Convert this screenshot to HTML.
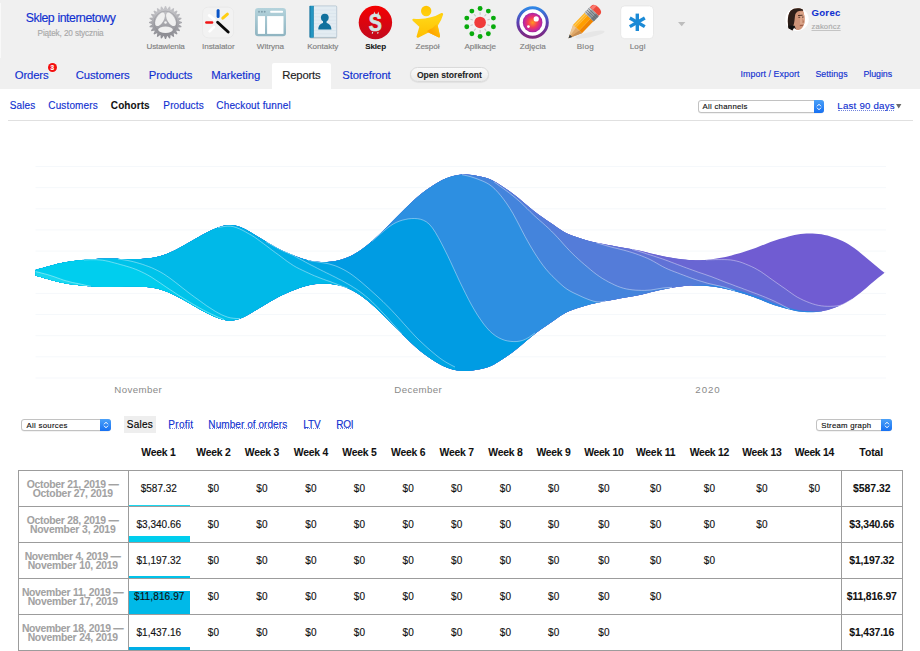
<!DOCTYPE html>
<html><head><meta charset="utf-8"><title>Sklep internetowy</title>
<style>
html,body{margin:0;padding:0;background:#fff}
body{width:920px;height:651px;position:relative;overflow:hidden;font-family:"Liberation Sans",sans-serif;-webkit-text-stroke:.14px}
</style></head><body>
<div style="position:absolute;left:0;top:0;width:920px;height:89.3px;background:#f0f0f0"></div>
<div style="position:absolute;left:272px;top:63px;width:59px;height:26px;background:#fff;border-radius:2px 2px 0 0"></div>
<div style="position:absolute;left:0;top:3px;width:1.2px;height:55px;background:#f9f9f9"></div>

<svg style="position:absolute;left:0;top:0" width="920" height="60" viewBox="0 0 920 60">
<defs>
<linearGradient id="gGear" x1="0" y1="0" x2="0" y2="1"><stop offset="0" stop-color="#c6c6ca"/><stop offset="1" stop-color="#8c8c92"/></linearGradient>
<linearGradient id="gRed" x1="0" y1="0" x2="0" y2="1"><stop offset="0" stop-color="#f40000"/><stop offset="1" stop-color="#c20a1e"/></linearGradient>
<linearGradient id="gRing" x1="0" y1="0" x2="0" y2="1"><stop offset="0" stop-color="#2f86e6"/><stop offset=".5" stop-color="#5a3fb0"/><stop offset="1" stop-color="#80267e"/></linearGradient>
<radialGradient id="gLens" cx=".5" cy=".5" r=".55"><stop offset="0" stop-color="#ff9a1e"/><stop offset=".45" stop-color="#f43a5c"/><stop offset=".8" stop-color="#c026a0"/><stop offset="1" stop-color="#7a2a9a"/></radialGradient>
<linearGradient id="gWit" x1="0" y1="0" x2="0" y2="1"><stop offset="0" stop-color="#b4d3dc"/><stop offset="1" stop-color="#8fb4c1"/></linearGradient>
<linearGradient id="gSpine" x1="0" y1="0" x2="1" y2="0"><stop offset="0" stop-color="#0f6f9c"/><stop offset=".6" stop-color="#2aa0cc"/><stop offset="1" stop-color="#127aa6"/></linearGradient>
<linearGradient id="gStar" gradientUnits="userSpaceOnUse" x1="0" y1="6" x2="0" y2="38"><stop offset="0" stop-color="#ffc400"/><stop offset=".4" stop-color="#ffd414"/><stop offset="1" stop-color="#ffbe00"/></linearGradient><linearGradient id="gStarD" gradientUnits="userSpaceOnUse" x1="430" y1="30" x2="438" y2="24"><stop offset="0" stop-color="#ffa600"/><stop offset="1" stop-color="#ffc60a"/></linearGradient>
<linearGradient id="gPen" x1="0" y1="0" x2="1" y2="1"><stop offset="0" stop-color="#ffb41a"/><stop offset=".5" stop-color="#ff9800"/><stop offset="1" stop-color="#e87800"/></linearGradient>
</defs>
<polygon points="163.76,9.31 164.98,6.01 166.02,6.01 167.24,9.31 169.27,6.44 170.27,6.70 170.59,10.21 173.30,7.96 174.19,8.48 173.60,11.95 176.80,10.47 177.53,11.20 176.05,14.40 179.52,13.81 180.04,14.70 177.79,17.41 181.30,17.73 181.56,18.73 178.69,20.76 181.99,21.98 181.99,23.02 178.69,24.24 181.56,26.27 181.30,27.27 177.79,27.59 180.04,30.30 179.52,31.19 176.05,30.60 177.53,33.80 176.80,34.53 173.60,33.05 174.19,36.52 173.30,37.04 170.59,34.79 170.27,38.30 169.27,38.56 167.24,35.69 166.02,38.99 164.98,38.99 163.76,35.69 161.73,38.56 160.73,38.30 160.41,34.79 157.70,37.04 156.81,36.52 157.40,33.05 154.20,34.53 153.47,33.80 154.95,30.60 151.48,31.19 150.96,30.30 153.21,27.59 149.70,27.27 149.44,26.27 152.31,24.24 149.01,23.02 149.01,21.98 152.31,20.76 149.44,18.73 149.70,17.73 153.21,17.41 150.96,14.70 151.48,13.81 154.95,14.40 153.47,11.20 154.20,10.47 157.40,11.95 156.81,8.48 157.70,7.96 160.41,10.21 160.73,6.70 161.73,6.44" fill="url(#gGear)"/><circle cx="165.5" cy="22.5" r="13.6" fill="url(#gGear)"/><circle cx="165.5" cy="22.5" r="11.4" fill="none" stroke="#85858b" stroke-width=".7" opacity=".55"/><ellipse cx="165.5" cy="29.8" rx="7.3" ry="3.2" fill="#f0f0f0"/><ellipse cx="160" cy="19.3" rx="7.5" ry="3.7" fill="#f0f0f0" transform="rotate(-60 160 19.3)"/><ellipse cx="171" cy="19.3" rx="7.5" ry="3.7" fill="#f0f0f0" transform="rotate(60 171 19.3)"/><circle cx="165.5" cy="22.5" r="1.25" fill="#f4f4f4"/>
<!-- installer -->
<rect x="202.6" y="7.2" width="31" height="30.6" rx="5.5" fill="#f2f2f2" stroke="#e8e8e8" stroke-width=".8"/>
<g stroke-linecap="round" fill="none">
<line x1="218.1" y1="10.6" x2="218.1" y2="16.4" stroke="#0a55c8" stroke-width="3"/>
<line x1="227.4" y1="14.2" x2="222.8" y2="18.2" stroke="#ffcf14" stroke-width="3"/>
<line x1="206.4" y1="22.5" x2="212" y2="22.5" stroke="#f01414" stroke-width="2.6"/>
<line x1="209.2" y1="15.4" x2="214.4" y2="19.6" stroke="#fff" stroke-width="2.8"/>
<line x1="209.6" y1="31.4" x2="214" y2="27" stroke="#fff" stroke-width="2.6"/>
<line x1="217.6" y1="22.2" x2="228.2" y2="32" stroke="#0a0a0a" stroke-width="2.9"/>
</g>
<!-- witryna -->
<rect x="255" y="8.1" width="31" height="28.2" rx="3.2" fill="url(#gWit)"/>
<rect x="257.8" y="16.1" width="7.2" height="17.8" fill="#fff"/>
<rect x="267.1" y="16.1" width="16.4" height="17.8" fill="#fff"/>
<rect x="270.2" y="10.7" width="12.8" height="2" rx=".6" fill="#fff"/>
<circle cx="259" cy="11.7" r=".95" fill="#7f9fac"/><circle cx="261.9" cy="11.7" r=".95" fill="#7f9fac"/><circle cx="264.7" cy="11.7" r=".95" fill="#7f9fac"/>
<!-- kontakty -->
<rect x="310.5" y="37" width="26" height="1.4" fill="#000" opacity=".25"/>
<rect x="312.5" y="5.9" width="24.2" height="31.5" rx="1" fill="#e3ecf2" stroke="#9fb6c4" stroke-width=".6"/>
<g stroke="#d3dfe8" stroke-width=".5"><line x1="314" y1="10" x2="336" y2="10"/><line x1="314" y1="13.4" x2="336" y2="13.4"/><line x1="314" y1="16.8" x2="336" y2="16.8"/><line x1="314" y1="20.2" x2="336" y2="20.2"/><line x1="314" y1="23.6" x2="336" y2="23.6"/><line x1="314" y1="27" x2="336" y2="27"/><line x1="314" y1="30.4" x2="336" y2="30.4"/><line x1="314" y1="33.8" x2="336" y2="33.8"/></g>
<rect x="309.4" y="5.7" width="4.4" height="32" rx=".8" fill="url(#gSpine)"/>
<circle cx="324.8" cy="17.6" r="3.9" fill="#10719e"/>
<path d="M318.3,29.4 C318.3,25.6 320.6,23.6 323,23 L323,21 L326.6,21 L326.6,23 C329,23.6 331.4,25.6 331.4,29.4 Z" fill="#10719e"/>
<!-- sklep -->
<circle cx="375.4" cy="22.5" r="16.7" fill="url(#gRed)"/>
<text transform="translate(375.3,31) scale(.84,1)" font-family="Liberation Sans, sans-serif" font-weight="bold" font-size="23.4" fill="#d2e5e3" stroke="#d2e5e3" stroke-width=".7" text-anchor="middle">S</text>
<path d="M373.4,14.6 L374.3,11.5 L375.4,14.2 Z M377.2,14.2 L378.4,11.5 L379.2,14.8 Z" fill="#d2e5e3"/>
<path d="M372,32 L373.2,32 L372.8,33.8 L371.8,33.8 Z M377.4,32 L378.6,32 L378.2,33.8 L377.2,33.8 Z" fill="#d2e5e3"/>
<!-- zespol -->
<circle cx="426.2" cy="11" r="5.2" fill="url(#gStar)"/>
<path d="M413.5,19.8 Q430,21.2 442,14.1 Q440.6,19.6 436.5,25.6 L438.9,36.3 L428.5,31.3 L417.7,36.6 L420.6,26.5 Z" fill="url(#gStar)" stroke="url(#gStar)" stroke-width="2.3" stroke-linejoin="round"/>
<path d="M428.5,31.3 Q433.6,29.4 436.5,25.6 L438.9,36.3 Z" fill="url(#gStarD)" stroke="url(#gStarD)" stroke-width="2.3" stroke-linejoin="round"/>
<line x1="480.10" y1="14.85" x2="480.10" y2="12.25" stroke="#c6c6c6" stroke-width="1.1"/><line x1="484.57" y1="16.30" x2="486.10" y2="14.20" stroke="#c6c6c6" stroke-width="1.1"/><line x1="487.33" y1="20.10" x2="489.80" y2="19.30" stroke="#c6c6c6" stroke-width="1.1"/><line x1="487.33" y1="24.80" x2="489.80" y2="25.60" stroke="#c6c6c6" stroke-width="1.1"/><line x1="484.57" y1="28.60" x2="486.10" y2="30.70" stroke="#c6c6c6" stroke-width="1.1"/><line x1="480.10" y1="30.05" x2="480.10" y2="32.65" stroke="#c6c6c6" stroke-width="1.1"/><line x1="475.63" y1="28.60" x2="474.10" y2="30.70" stroke="#c6c6c6" stroke-width="1.1"/><line x1="472.87" y1="24.80" x2="470.40" y2="25.60" stroke="#c6c6c6" stroke-width="1.1"/><line x1="472.87" y1="20.10" x2="470.40" y2="19.30" stroke="#c6c6c6" stroke-width="1.1"/><line x1="475.63" y1="16.30" x2="474.10" y2="14.20" stroke="#c6c6c6" stroke-width="1.1"/><circle cx="480.10" cy="8.45" r="2.45" fill="#08ab0c"/><circle cx="488.33" cy="11.12" r="2.45" fill="#08ab0c"/><circle cx="493.41" cy="18.12" r="2.45" fill="#08ab0c"/><circle cx="493.41" cy="26.78" r="2.45" fill="#08ab0c"/><circle cx="488.33" cy="33.78" r="2.45" fill="#08ab0c"/><circle cx="480.10" cy="36.45" r="2.45" fill="#08ab0c"/><circle cx="471.87" cy="33.78" r="2.45" fill="#08ab0c"/><circle cx="466.79" cy="26.78" r="2.45" fill="#08ab0c"/><circle cx="466.79" cy="18.12" r="2.45" fill="#08ab0c"/><circle cx="471.87" cy="11.12" r="2.45" fill="#08ab0c"/><circle cx="480.1" cy="22.45" r="5.8" fill="#f03a3a"/>
<!-- zdjecia -->
<circle cx="532.6" cy="22.5" r="14.7" fill="#fff" stroke="url(#gRing)" stroke-width="3"/>
<circle cx="532.6" cy="22.5" r="9.8" fill="url(#gLens)"/>
<circle cx="536.2" cy="18.9" r="2.6" fill="#fff"/><circle cx="528.4" cy="26.6" r="1.4" fill="#fff"/>
<!-- blog pencil -->
<ellipse cx="590" cy="34.6" rx="15" ry="2.6" fill="#000" opacity=".04" transform="rotate(-12 590 34.6)"/>
<g transform="translate(568.5,38.3) rotate(-46)">
<path d="M0,0 L13,-6.1 L13,6.1 Z" fill="#dfa869"/>
<path d="M0,0 L13,-6.1 L13,-2 Z" fill="#edc592"/>
<path d="M0,0 L13,6.1 L13,2.4 Z" fill="#c98f52"/>
<path d="M0,0 L3.6,-1.7 L3.6,1.7 Z" fill="#39424a"/>
<rect x="13" y="-6.1" width="16.6" height="4" fill="#ffb21e"/>
<rect x="13" y="-5" width="16.6" height="1.1" fill="#ffd068" opacity=".8"/>
<rect x="13" y="-2.1" width="16.6" height="4.4" fill="#ff9e00"/>
<rect x="13" y="2.3" width="16.6" height="3.8" fill="#f08400"/>
<rect x="29.6" y="-6.3" width="7.6" height="12.6" fill="#9aa0a5"/>
<rect x="29.6" y="-6.3" width="7.6" height="3" fill="#c2c6c9"/>
<rect x="29.6" y="2.6" width="7.6" height="3.7" fill="#767c82"/>
<g stroke="#5e646a" stroke-width=".8" opacity=".8"><line x1="31.2" y1="-6.3" x2="31.2" y2="6.3"/><line x1="33.2" y1="-6.3" x2="33.2" y2="6.3"/><line x1="35.2" y1="-6.3" x2="35.2" y2="6.3"/></g>
<path d="M37.2,-6.2 L39.4,-6.2 C42,-6.2 43,-3.4 43,0 C43,3.4 42,6.2 39.4,6.2 L37.2,6.2 Z" fill="#ee4a3c"/>
<path d="M37.6,-5.4 L39.4,-5.4 C41.4,-5.4 42.6,-4 43,-2.2 L37.6,-2.2 Z" fill="#ff8a80" opacity=".75"/>
</g>
<!-- logi -->
<rect x="620.7" y="5.9" width="32.8" height="32.8" rx="4" fill="#fff" stroke="#e4e4e4" stroke-width=".8"/>
<g stroke="#1b8ad6" stroke-width="3.4"><line x1="637.3" y1="13.6" x2="637.3" y2="31"/><line x1="629.8" y1="18" x2="644.8" y2="26.6"/><line x1="629.8" y1="26.6" x2="644.8" y2="18"/></g>
<path d="M678,22 L685.4,22 L681.7,26.2 Z" fill="#bdbdbd"/>
<!-- avatar -->
<circle cx="797" cy="19.3" r="11.7" fill="#fff"/>
<clipPath id="av"><path d="M788.6,28.2 C787.2,22 787.6,14.5 790.6,10.8 C793.6,7.8 799.6,7.6 802.8,9.6 L803.8,13.2 C804.8,16.4 805,20.4 804.2,23.8 C803.2,27.4 801,29.8 798.6,30 C796.2,30.2 794.8,28.8 794.2,27.4 L792.4,30.4 Z"/></clipPath>
<g clip-path="url(#av)">
<rect x="786" y="7" width="22" height="25" fill="#cf9478"/>
<rect x="800" y="12" width="6" height="12" fill="#dba58a"/>
<path d="M786,7 L804,7 L804.2,11 C800,10 796.6,11 795.4,14 C794.6,17 794.8,20.4 794,23.4 L793,26.4 L786,31 Z" fill="#2c1e18"/>
<path d="M786,32 L788,25.4 L794.6,25.8 L795.6,28.6 L792,32 Z" fill="#101010"/>
<path d="M798,15.6 L802.6,15.2" stroke="#3c241a" stroke-width=".9" fill="none"/>
<path d="M798.4,17.4 L800.2,17.3 M802,17.2 L803.6,17" stroke="#3c241a" stroke-width=".8" fill="none"/>
<path d="M802.6,18 L804.4,22.4 L802.4,23 Z" fill="#b87a5e"/>
<path d="M799.8,25.6 L803.4,25.3" stroke="#8e4c3c" stroke-width=".8"/>
</g>
</svg>

<div style="position:absolute;top:11px;font-size:12.3px;line-height:14.145px;color:#1030d0;white-space:nowrap;letter-spacing:-0.452px;word-spacing:0.271px;left:25.70px;">Sklep internetowy</div>
<div style="position:absolute;top:29px;font-size:8.2px;line-height:9.430px;color:#a8a8a8;white-space:nowrap;letter-spacing:-0.131px;word-spacing:0.079px;left:37.57px;">Piątek, 20 stycznia</div>
<div style="position:absolute;top:42px;font-size:8.1px;line-height:9.315px;color:#808080;white-space:nowrap;letter-spacing:-0.138px;left:146.47px;">Ustawienia</div>
<div style="position:absolute;top:42px;font-size:8.1px;line-height:9.315px;color:#808080;white-space:nowrap;letter-spacing:-0.083px;left:202.07px;">Instalator</div>
<div style="position:absolute;top:42px;font-size:8.1px;line-height:9.315px;color:#808080;white-space:nowrap;letter-spacing:-0.047px;left:256.87px;">Witryna</div>
<div style="position:absolute;top:42px;font-size:8.1px;line-height:9.315px;color:#808080;white-space:nowrap;letter-spacing:-0.050px;left:307.27px;">Kontakty</div>
<div style="position:absolute;top:42px;font-size:8.1px;line-height:9.315px;color:#111;white-space:nowrap;letter-spacing:-0.189px;font-weight:bold;-webkit-text-stroke:.06px;left:365.27px;">Sklep</div>
<div style="position:absolute;top:42px;font-size:8.1px;line-height:9.315px;color:#808080;white-space:nowrap;letter-spacing:-0.029px;left:415.47px;">Zespół</div>
<div style="position:absolute;top:42px;font-size:8.1px;line-height:9.315px;color:#808080;white-space:nowrap;letter-spacing:-0.107px;left:464.47px;">Aplikacje</div>
<div style="position:absolute;top:42px;font-size:8.1px;line-height:9.315px;color:#808080;white-space:nowrap;letter-spacing:-0.040px;left:519.87px;">Zdjęcia</div>
<div style="position:absolute;top:42px;font-size:8.1px;line-height:9.315px;color:#808080;white-space:nowrap;letter-spacing:0.283px;left:576.67px;">Blog</div>
<div style="position:absolute;top:42px;font-size:8.1px;line-height:9.315px;color:#808080;white-space:nowrap;letter-spacing:0.180px;left:629.67px;">Logi</div>
<div style="position:absolute;top:7px;font-size:9.6px;line-height:11.040px;color:#1030d0;white-space:nowrap;letter-spacing:0.328px;font-weight:bold;-webkit-text-stroke:.06px;left:811.38px;">Gorec</div>
<div style="position:absolute;top:23px;font-size:7.7px;line-height:8.855px;color:#aaa;white-space:nowrap;letter-spacing:0.133px;left:811.50px;text-decoration:underline;text-decoration-color:#c4c4c4;text-decoration-thickness:.7px;text-underline-offset:1px;">zakończ</div>
<div style="position:absolute;top:69px;font-size:11.3px;line-height:12.995px;color:#1030d0;white-space:nowrap;letter-spacing:-0.152px;left:14.87px;">Orders</div>
<div style="position:absolute;top:69px;font-size:11.3px;line-height:12.995px;color:#1030d0;white-space:nowrap;letter-spacing:-0.082px;left:75.77px;">Customers</div>
<div style="position:absolute;top:69px;font-size:11.3px;line-height:12.995px;color:#1030d0;white-space:nowrap;letter-spacing:-0.132px;left:148.77px;">Products</div>
<div style="position:absolute;top:69px;font-size:11.3px;line-height:12.995px;color:#1030d0;white-space:nowrap;letter-spacing:-0.080px;left:211.27px;">Marketing</div>
<div style="position:absolute;top:69px;font-size:11.3px;line-height:12.995px;color:#222;white-space:nowrap;letter-spacing:-0.182px;left:282.27px;">Reports</div>
<div style="position:absolute;top:69px;font-size:11.3px;line-height:12.995px;color:#1030d0;white-space:nowrap;letter-spacing:-0.127px;left:342.27px;">Storefront</div>
<div style="position:absolute;left:47.8px;top:62.6px;width:8.8px;height:9.6px;border-radius:4.6px;background:#f30f0f;box-shadow:0 0 1.5px rgba(255,255,255,.9);color:#fff;font-size:6.4px;line-height:9.6px;font-weight:bold;text-align:center">3</div>
<div style="position:absolute;left:410px;top:67.2px;width:78.6px;height:14.8px;border-radius:8px;background:linear-gradient(#fafafa,#ebebeb);border:.6px solid #dadada;box-sizing:border-box;box-shadow:0 .5px 1px rgba(0,0,0,.10)"></div>
<div style="position:absolute;top:71px;font-size:8.6px;line-height:9.890px;color:#222;white-space:nowrap;letter-spacing:-0.009px;word-spacing:0.005px;font-weight:bold;-webkit-text-stroke:.06px;left:416.94px;">Open storefront</div>
<div style="position:absolute;top:69px;font-size:8.8px;line-height:10.120px;color:#1030d0;white-space:nowrap;letter-spacing:0.104px;left:740.43px;">Import / Export</div>
<div style="position:absolute;top:69px;font-size:8.8px;line-height:10.120px;color:#1030d0;white-space:nowrap;letter-spacing:0.050px;left:815.43px;">Settings</div>
<div style="position:absolute;top:69px;font-size:8.8px;line-height:10.120px;color:#1030d0;white-space:nowrap;letter-spacing:-0.036px;left:863.43px;">Plugins</div>
<div style="position:absolute;top:99.8px;font-size:10px;line-height:11.500px;color:#1030d0;white-space:nowrap;letter-spacing:0.071px;left:9.85px;">Sales</div>
<div style="position:absolute;top:99.8px;font-size:10px;line-height:11.500px;color:#1030d0;white-space:nowrap;letter-spacing:0.118px;left:48.35px;">Customers</div>
<div style="position:absolute;top:99.8px;font-size:10px;line-height:11.500px;color:#111;white-space:nowrap;letter-spacing:0.076px;font-weight:bold;-webkit-text-stroke:.06px;left:110.85px;">Cohorts</div>
<div style="position:absolute;top:99.8px;font-size:10px;line-height:11.500px;color:#1030d0;white-space:nowrap;letter-spacing:0.119px;left:163.35px;">Products</div>
<div style="position:absolute;top:99.8px;font-size:10px;line-height:11.500px;color:#1030d0;white-space:nowrap;letter-spacing:0.144px;left:216.35px;">Checkout funnel</div>
<div style="position:absolute;left:698px;top:100.2px;width:126px;height:12.6px;box-sizing:border-box;border:.7px solid #c2c2c2;border-radius:3px;background:#fff;box-shadow:0 .5px .6px rgba(0,0,0,.1)"></div><div style="position:absolute;left:813.5px;top:100.2px;width:10.5px;height:12.6px;border-radius:0 3px 3px 0;background:linear-gradient(#4ba1f8,#1670f2)"></div><svg style="position:absolute;left:814.75px;top:101.5px" width="8" height="10" viewBox="0 0 8 10"><path d="M2.3,4 L4,2.2 L5.7,4 M2.3,6 L4,7.8 L5.7,6" stroke="#fff" stroke-width="1" fill="none" stroke-linecap="round" stroke-linejoin="round"/></svg><div style="position:absolute;top:103px;font-size:7.8px;line-height:8.970px;color:#111;white-space:nowrap;letter-spacing:0.270px;left:702.49px;">All channels</div>
<div style="position:absolute;top:100px;font-size:9.7px;line-height:11.155px;color:#1030d0;white-space:nowrap;letter-spacing:0.211px;left:837.37px;">Last 90 days<span style="position:absolute;left:0.63px;right:0.63px;top:9.5px;height:0;border-bottom:1px dotted rgba(20,50,200,.6)"></span></div>
<svg style="position:absolute;left:895.5px;top:103.6px" width="6" height="5" viewBox="0 0 6 5"><path d="M0,0 L5.4,0 L2.7,4.6 Z" fill="#6a6a6a"/></svg>
<div style="position:absolute;left:8px;top:120.1px;width:905px;height:1px;background:#e0e0e0"></div>
<svg style="position:absolute;left:0;top:130px" width="920" height="275" viewBox="0 130 920 275"><rect x="35.5" y="166.00" width="850.5" height="1" fill="#f5f8fb"/><rect x="35.5" y="187.15" width="850.5" height="1" fill="#f5f8fb"/><rect x="35.5" y="208.30" width="850.5" height="1" fill="#f5f8fb"/><rect x="35.5" y="229.45" width="850.5" height="1" fill="#f5f8fb"/><rect x="35.5" y="250.60" width="850.5" height="1" fill="#f5f8fb"/><rect x="35.5" y="271.75" width="850.5" height="1" fill="#f5f8fb"/><rect x="35.5" y="292.90" width="850.5" height="1" fill="#f5f8fb"/><rect x="35.5" y="314.05" width="850.5" height="1" fill="#f5f8fb"/><rect x="35.5" y="335.20" width="850.5" height="1" fill="#f5f8fb"/><rect x="35.5" y="356.35" width="850.5" height="1" fill="#f5f8fb"/><rect x="35.5" y="377.50" width="850.5" height="1" fill="#f5f8fb"/><path d="M35.5,270.0L38.5,269.2L41.5,268.3L44.5,267.5L47.5,266.6L50.5,265.8L53.5,264.9L56.5,264.1L59.5,263.4L62.5,262.8L65.5,262.2L68.5,261.7L71.5,261.3L74.5,260.9L77.5,260.5L80.5,260.2L83.5,259.9L86.5,259.6L89.5,259.4L92.5,259.2L95.5,259.0L98.5,258.9L101.5,258.8L104.5,258.7L107.5,258.7L110.5,258.7L113.5,258.7L116.5,258.8L119.5,258.9L122.5,258.9L125.5,259.0L128.5,259.1L131.5,259.1L134.5,259.1L137.5,259.1L140.5,259.0L143.5,258.9L146.5,258.6L149.5,258.3L152.5,257.9L155.5,257.3L158.5,256.6L161.5,255.8L164.5,254.8L167.5,253.7L170.5,252.4L173.5,251.0L176.5,249.5L179.5,247.9L182.5,246.2L185.5,244.6L188.5,242.8L191.5,241.1L194.5,239.4L197.5,237.7L200.5,236.0L203.5,234.3L206.5,232.8L209.5,231.3L212.5,229.8L215.5,228.5L218.5,227.4L221.5,226.4L224.5,225.6L227.5,225.1L230.5,225.0L233.5,225.3L236.5,225.9L239.5,226.8L242.5,228.0L245.5,229.5L248.5,231.1L251.5,232.9L254.5,234.7L257.5,236.5L260.5,238.3L263.5,240.1L266.5,241.9L269.5,243.7L272.5,245.4L275.5,247.1L278.5,248.7L281.5,250.2L284.5,251.6L287.5,252.9L290.5,254.2L293.5,255.4L296.5,256.6L299.5,257.7L302.5,258.7L305.5,259.6L308.5,260.4L311.5,261.0L314.5,261.4L317.5,261.8L320.5,262.0L323.5,262.0L326.5,262.0L329.5,261.8L332.5,261.5L335.5,261.0L338.5,260.4L341.5,259.6L344.5,258.6L347.5,257.4L350.5,256.1L353.5,254.6L356.5,252.9L359.5,251.0L362.5,248.9L365.5,246.6L368.5,244.2L371.5,241.6L374.5,238.9L377.5,236.1L380.5,233.3L383.5,230.3L386.5,227.3L389.5,224.3L392.5,221.2L395.5,218.2L398.5,215.2L401.5,212.2L404.5,209.2L407.5,206.3L410.5,203.4L413.5,200.6L416.5,197.9L419.5,195.3L422.5,192.9L425.5,190.7L428.5,188.5L431.5,186.5L434.5,184.5L437.5,182.7L440.5,181.0L443.5,179.5L446.5,178.2L449.5,177.2L452.5,176.2L455.5,175.5L458.5,175.0L461.5,174.6L464.5,174.5L467.5,174.6L470.5,174.9L473.5,175.3L476.5,175.8L479.5,176.4L482.5,177.0L485.5,177.7L488.5,178.7L491.5,180.0L494.5,181.5L497.5,183.3L500.5,185.2L503.5,187.2L506.5,189.2L509.5,191.2L512.5,193.4L515.5,195.7L518.5,198.1L521.5,200.7L524.5,203.2L527.5,205.8L530.5,208.3L533.5,210.7L536.5,213.0L539.5,215.2L542.5,217.4L545.5,219.4L548.5,221.5L551.5,223.5L554.5,225.6L557.5,227.7L560.5,229.8L563.5,231.7L566.5,233.3L569.5,234.6L572.5,235.8L575.5,236.8L578.5,237.8L581.5,238.8L584.5,239.7L587.5,240.6L590.5,241.4L593.5,242.1L596.5,242.7L599.5,243.3L602.5,243.9L605.5,244.5L608.5,245.0L611.5,245.6L614.5,246.2L617.5,246.7L620.5,247.3L623.5,247.8L626.5,248.3L629.5,248.8L632.5,249.3L635.5,249.9L638.5,250.4L641.5,251.1L644.5,251.8L647.5,252.6L650.5,253.4L653.5,254.1L656.5,254.8L659.5,255.5L662.5,256.1L665.5,256.7L668.5,257.3L671.5,257.8L674.5,258.3L677.5,258.8L680.5,259.1L683.5,259.5L686.5,259.7L689.5,260.0L692.5,260.1L695.5,260.2L698.5,260.2L701.5,260.2L704.5,260.0L707.5,259.8L710.5,259.4L713.5,259.1L716.5,258.6L719.5,258.1L722.5,257.5L725.5,256.9L728.5,256.2L731.5,255.4L734.5,254.6L737.5,253.8L740.5,252.9L743.5,252.0L746.5,251.1L749.5,250.1L752.5,249.1L755.5,248.0L758.5,246.8L761.5,245.6L764.5,244.4L767.5,243.2L770.5,242.0L773.5,240.9L776.5,239.9L779.5,239.0L782.5,238.2L785.5,237.4L788.5,236.6L791.5,235.8L794.5,235.1L797.5,234.5L800.5,234.1L803.5,233.8L806.5,233.6L809.5,233.5L812.5,233.5L815.5,233.7L818.5,233.9L821.5,234.3L824.5,234.9L827.5,235.6L830.5,236.5L833.5,237.5L836.5,238.6L839.5,239.8L842.5,241.1L845.5,242.6L848.5,244.3L851.5,246.2L854.5,248.3L857.5,250.5L860.5,252.9L863.5,255.4L866.5,257.9L869.5,260.5L872.5,263.0L875.5,265.5L878.5,268.0L881.5,270.4L884.5,272.8L884.5,272.8L881.5,275.2L878.5,277.6L875.5,280.1L872.5,282.6L869.5,285.1L866.5,287.7L863.5,290.2L860.5,292.7L857.5,295.1L854.5,297.3L851.5,299.4L848.5,301.3L845.5,303.0L842.5,304.5L839.5,305.8L836.5,307.0L833.5,308.1L830.5,309.1L827.5,310.0L824.5,310.7L821.5,311.3L818.5,311.7L815.5,311.9L812.5,312.1L809.5,312.1L806.5,312.0L803.5,311.8L800.5,311.5L797.5,311.1L794.5,310.5L791.5,309.8L788.5,309.0L785.5,308.2L782.5,307.4L779.5,306.6L776.5,305.7L773.5,304.7L770.5,303.6L767.5,302.4L764.5,301.2L761.5,300.0L758.5,298.8L755.5,297.6L752.5,296.5L749.5,295.5L746.5,294.5L743.5,293.6L740.5,292.7L737.5,291.8L734.5,291.0L731.5,290.2L728.5,289.4L725.5,288.7L722.5,288.1L719.5,287.5L716.5,287.0L713.5,286.5L710.5,286.2L707.5,285.8L704.5,285.6L701.5,285.4L698.5,285.4L695.5,285.4L692.5,285.5L689.5,285.6L686.5,285.9L683.5,286.1L680.5,286.5L677.5,286.8L674.5,287.3L671.5,287.8L668.5,288.3L665.5,288.9L662.5,289.5L659.5,290.1L656.5,290.8L653.5,291.5L650.5,292.2L647.5,293.0L644.5,293.8L641.5,294.5L638.5,295.2L635.5,295.7L632.5,296.3L629.5,296.8L626.5,297.3L623.5,297.8L620.5,298.3L617.5,298.9L614.5,299.4L611.5,300.0L608.5,300.6L605.5,301.1L602.5,301.7L599.5,302.3L596.5,302.9L593.5,303.5L590.5,304.2L587.5,305.0L584.5,305.9L581.5,306.8L578.5,307.8L575.5,308.8L572.5,309.8L569.5,311.0L566.5,312.3L563.5,313.9L560.5,315.8L557.5,317.9L554.5,320.0L551.5,322.1L548.5,324.1L545.5,326.2L542.5,328.2L539.5,330.4L536.5,332.6L533.5,334.9L530.5,337.3L527.5,339.8L524.5,342.4L521.5,344.9L518.5,347.5L515.5,349.9L512.5,352.2L509.5,354.4L506.5,356.4L503.5,358.4L500.5,360.4L497.5,362.3L494.5,364.1L491.5,365.6L488.5,366.9L485.5,367.9L482.5,368.6L479.5,369.2L476.5,369.8L473.5,370.3L470.5,370.7L467.5,371.0L464.5,371.1L461.5,371.0L458.5,370.6L455.5,370.1L452.5,369.4L449.5,368.4L446.5,367.4L443.5,366.1L440.5,364.6L437.5,362.9L434.5,361.1L431.5,359.1L428.5,357.1L425.5,354.9L422.5,352.7L419.5,350.3L416.5,347.7L413.5,345.0L410.5,342.2L407.5,339.3L404.5,336.4L401.5,333.4L398.5,330.4L395.5,327.4L392.5,324.4L389.5,321.3L386.5,318.3L383.5,315.3L380.5,312.3L377.5,309.5L374.5,306.7L371.5,304.0L368.5,301.4L365.5,299.0L362.5,296.7L359.5,294.6L356.5,292.7L353.5,291.0L350.5,289.5L347.5,288.2L344.5,287.0L341.5,286.0L338.5,285.2L335.5,284.6L332.5,284.1L329.5,283.8L326.5,283.6L323.5,283.6L320.5,283.6L317.5,283.9L314.5,284.2L311.5,284.6L308.5,285.2L305.5,286.0L302.5,286.9L299.5,287.9L296.5,289.0L293.5,290.2L290.5,291.4L287.5,292.7L284.5,294.0L281.5,295.4L278.5,296.9L275.5,298.5L272.5,300.2L269.5,301.9L266.5,303.7L263.5,305.5L260.5,307.3L257.5,309.1L254.5,310.9L251.5,312.7L248.5,314.5L245.5,316.1L242.5,317.6L239.5,318.8L236.5,319.7L233.5,320.3L230.5,320.6L227.5,320.5L224.5,320.0L221.5,319.2L218.5,318.2L215.5,317.1L212.5,315.8L209.5,314.3L206.5,312.8L203.5,311.3L200.5,309.6L197.5,307.9L194.5,306.2L191.5,304.5L188.5,302.8L185.5,301.0L182.5,299.4L179.5,297.7L176.5,296.1L173.5,294.6L170.5,293.2L167.5,291.9L164.5,290.8L161.5,289.8L158.5,289.0L155.5,288.3L152.5,287.7L149.5,287.3L146.5,287.0L143.5,286.7L140.5,286.6L137.5,286.5L134.5,286.5L131.5,286.5L128.5,286.5L125.5,286.6L122.5,286.7L119.5,286.7L116.5,286.8L113.5,286.9L110.5,286.9L107.5,286.9L104.5,286.9L101.5,286.8L98.5,286.7L95.5,286.6L92.5,286.4L89.5,286.2L86.5,286.0L83.5,285.7L80.5,285.4L77.5,285.1L74.5,284.7L71.5,284.3L68.5,283.9L65.5,283.4L62.5,282.8L59.5,282.2L56.5,281.5L53.5,280.7L50.5,279.8L47.5,279.0L44.5,278.1L41.5,277.3L38.5,276.4L35.5,275.6Z" fill="#705cd2"/>
<path d="M35.5,270.0L38.5,269.1L41.5,268.3L44.5,267.4L47.5,266.6L50.5,265.7L53.5,264.9L56.5,264.1L59.6,263.4L62.6,262.8L65.6,262.2L68.6,261.7L71.6,261.3L74.6,260.9L77.6,260.5L80.6,260.2L83.6,259.9L86.6,259.6L89.6,259.4L92.6,259.2L95.6,259.0L98.6,258.8L101.6,258.8L104.7,258.7L107.7,258.7L110.7,258.7L113.7,258.7L116.7,258.8L119.7,258.9L122.7,258.9L125.7,259.0L128.7,259.1L131.7,259.1L134.7,259.1L137.7,259.1L140.7,259.0L143.7,258.8L146.7,258.6L149.8,258.3L152.8,257.8L155.8,257.3L158.8,256.6L161.8,255.7L164.8,254.7L167.8,253.6L170.8,252.3L173.8,250.8L176.8,249.3L179.8,247.7L182.8,246.1L185.8,244.4L188.8,242.6L191.8,240.9L194.9,239.2L197.9,237.5L200.9,235.8L203.9,234.1L206.9,232.6L209.9,231.1L212.9,229.7L215.9,228.4L218.9,227.2L221.9,226.2L224.9,225.5L227.9,225.1L230.9,225.0L233.9,225.3L237.0,226.0L240.0,227.0L243.0,228.2L246.0,229.7L249.0,231.4L252.0,233.2L255.0,235.0L258.0,236.8L261.0,238.6L264.0,240.4L267.0,242.2L270.0,244.0L273.0,245.7L276.0,247.4L279.0,249.0L282.1,250.5L285.1,251.9L288.1,253.2L291.1,254.4L294.1,255.6L297.1,256.8L300.1,257.9L303.1,258.9L306.1,259.8L309.1,260.5L312.1,261.1L315.1,261.5L318.1,261.8L321.1,262.0L324.1,262.0L327.2,262.0L330.2,261.7L333.2,261.4L336.2,260.9L339.2,260.2L342.2,259.3L345.2,258.3L348.2,257.1L351.2,255.8L354.2,254.2L357.2,252.4L360.2,250.5L363.2,248.3L366.2,246.0L369.2,243.6L372.3,241.0L375.3,238.2L378.3,235.4L381.3,232.5L384.3,229.5L387.3,226.5L390.3,223.5L393.3,220.4L396.3,217.4L399.3,214.4L402.3,211.4L405.3,208.4L408.3,205.5L411.3,202.6L414.3,199.8L417.4,197.1L420.4,194.6L423.4,192.3L426.4,190.0L429.4,187.9L432.4,185.9L435.4,184.0L438.4,182.2L441.4,180.5L444.4,179.1L447.4,177.9L450.4,176.9L453.4,176.0L456.4,175.3L459.4,174.8L462.5,174.6L465.5,174.5L468.5,174.7L471.5,175.0L474.5,175.5L477.5,176.0L480.5,176.6L483.5,177.2L486.5,178.0L489.5,179.1L492.5,180.5L495.5,182.1L498.5,183.9L501.5,185.9L504.5,187.9L507.6,189.9L510.6,192.0L513.6,194.2L516.6,196.6L519.6,199.0L522.6,201.6L525.6,204.2L528.6,206.7L531.6,209.2L534.6,211.6L537.6,213.9L540.6,216.1L543.6,218.1L546.6,220.2L549.7,222.2L552.7,224.3L555.7,226.4L558.7,228.5L561.7,230.5L564.7,232.3L567.7,233.8L570.7,235.1L573.7,236.2L576.7,237.2L579.7,238.2L582.7,239.2L585.7,240.1L588.7,240.9L591.7,241.7L594.8,242.4L597.8,243.0L600.8,243.6L603.8,244.1L606.8,244.7L609.8,245.3L612.8,245.8L615.8,246.4L618.8,247.0L621.8,247.5L624.8,248.0L627.8,248.6L630.8,249.1L633.8,249.6L636.8,250.1L639.9,250.7L642.9,251.4L645.9,252.2L648.9,253.0L651.9,253.7L654.9,254.5L657.9,255.1L660.9,255.8L663.9,256.4L666.9,257.0L669.9,257.5L672.9,258.1L675.9,258.5L678.9,258.9L681.9,259.3L685.0,259.6L688.0,259.9L691.0,260.1L694.0,260.2L697.0,260.2L700.0,260.2L703.0,260.1L706.0,259.9L706.0,259.9L709.0,259.7L712.1,259.7L715.1,259.6L718.2,259.6L721.2,259.6L724.2,259.6L727.3,259.7L730.3,259.9L733.4,260.4L736.4,261.0L739.5,261.8L742.5,262.8L745.5,264.0L748.6,265.3L751.6,266.6L754.7,268.1L757.7,269.8L760.8,271.6L763.8,273.7L766.8,275.8L769.9,278.1L772.9,280.2L776.0,282.4L779.0,284.5L782.0,286.6L785.1,288.7L788.1,290.9L791.2,293.1L794.2,295.2L797.2,297.1L800.3,298.7L803.3,300.2L806.4,301.5L809.4,302.7L812.5,303.8L815.5,304.7L818.5,305.4L821.6,305.9L824.6,306.2L827.7,306.3L830.7,306.3L833.8,306.2L836.8,305.9L839.8,305.4L842.9,304.3L845.9,302.7L849.0,301.0L852.0,299.0L852.0,299.0L849.0,301.0L846.0,302.7L843.0,304.2L840.0,305.6L837.0,306.8L834.0,308.0L831.0,309.0L828.0,309.9L825.0,310.6L822.0,311.2L819.0,311.6L816.0,311.9L813.0,312.1L810.0,312.1L807.0,312.0L804.0,311.9L801.0,311.6L798.0,311.2L795.0,310.6L792.0,309.9L789.0,309.2L786.0,308.4L783.0,307.5L780.0,306.7L777.0,305.8L774.0,304.9L771.0,303.8L767.9,302.6L764.9,301.4L761.9,300.1L758.9,298.9L755.9,297.8L752.9,296.7L749.9,295.7L746.9,294.7L743.9,293.7L740.9,292.8L737.9,291.9L734.9,291.1L731.9,290.3L728.9,289.5L725.9,288.8L722.9,288.2L719.9,287.6L716.9,287.1L713.9,286.6L710.9,286.2L707.9,285.9L704.9,285.6L701.9,285.5L698.9,285.4L695.9,285.4L692.9,285.4L689.9,285.6L686.9,285.8L683.9,286.1L680.9,286.4L677.9,286.8L674.9,287.2L671.9,287.7L668.9,288.2L665.9,288.8L662.9,289.4L659.9,290.0L656.9,290.7L653.9,291.4L650.9,292.1L647.9,292.9L644.9,293.7L641.9,294.4L638.9,295.1L635.9,295.7L632.9,296.2L629.9,296.7L626.9,297.2L623.9,297.7L620.9,298.3L617.9,298.8L614.9,299.4L611.9,299.9L608.9,300.5L605.8,301.1L602.8,301.6L599.8,302.2L596.8,302.8L593.8,303.4L590.8,304.1L587.8,304.9L584.8,305.8L581.8,306.7L578.8,307.7L575.8,308.6L572.8,309.7L569.8,310.8L566.8,312.2L563.8,313.8L560.8,315.6L557.8,317.6L554.8,319.8L551.8,321.9L548.8,323.9L545.8,326.0L542.8,328.0L539.8,330.1L536.8,332.4L533.8,334.7L530.8,337.1L527.8,339.5L524.8,342.1L521.8,344.7L518.8,347.2L515.8,349.7L512.8,352.0L509.8,354.2L506.8,356.2L503.8,358.2L500.8,360.2L497.8,362.1L494.8,363.9L491.8,365.5L488.8,366.8L485.8,367.8L482.8,368.6L479.8,369.2L476.8,369.7L473.8,370.2L470.8,370.7L467.8,371.0L464.8,371.1L461.8,371.0L458.8,370.7L455.8,370.1L452.8,369.4L449.8,368.5L446.8,367.5L443.8,366.2L440.7,364.7L437.7,363.1L434.7,361.2L431.7,359.3L428.7,357.2L425.7,355.1L422.7,352.8L419.7,350.5L416.7,347.9L413.7,345.2L410.7,342.4L407.7,339.5L404.7,336.6L401.7,333.6L398.7,330.6L395.7,327.6L392.7,324.6L389.7,321.5L386.7,318.5L383.7,315.5L380.7,312.5L377.7,309.7L374.7,306.9L371.7,304.2L368.7,301.6L365.7,299.2L362.7,296.9L359.7,294.8L356.7,292.9L353.7,291.1L350.7,289.6L347.7,288.2L344.7,287.1L341.7,286.1L338.7,285.3L335.7,284.6L332.7,284.2L329.7,283.8L326.7,283.6L323.7,283.6L320.7,283.6L317.7,283.8L314.7,284.2L311.7,284.6L308.7,285.2L305.7,285.9L302.7,286.8L299.7,287.8L296.7,288.9L293.7,290.1L290.7,291.3L287.7,292.6L284.7,293.9L281.7,295.3L278.6,296.8L275.6,298.4L272.6,300.1L269.6,301.8L266.6,303.6L263.6,305.4L260.6,307.2L257.6,309.0L254.6,310.8L251.6,312.7L248.6,314.4L245.6,316.1L242.6,317.5L239.6,318.8L236.6,319.7L233.6,320.3L230.6,320.6L227.6,320.5L224.6,320.0L221.6,319.3L218.6,318.3L215.6,317.1L212.6,315.8L209.6,314.4L206.6,312.9L203.6,311.3L200.6,309.7L197.6,308.0L194.6,306.3L191.6,304.6L188.6,302.8L185.6,301.1L182.6,299.4L179.6,297.8L176.6,296.2L173.6,294.7L170.6,293.2L167.6,292.0L164.6,290.8L161.6,289.8L158.6,289.0L155.6,288.3L152.6,287.7L149.6,287.3L146.6,287.0L143.6,286.7L140.6,286.6L137.6,286.5L134.6,286.5L131.6,286.5L128.6,286.5L125.6,286.6L122.6,286.7L119.6,286.7L116.5,286.8L113.5,286.9L110.5,286.9L107.5,286.9L104.5,286.9L101.5,286.8L98.5,286.7L95.5,286.6L92.5,286.4L89.5,286.2L86.5,286.0L83.5,285.7L80.5,285.4L77.5,285.1L74.5,284.7L71.5,284.3L68.5,283.9L65.5,283.4L62.5,282.8L59.5,282.2L56.5,281.5L53.5,280.7L50.5,279.8L47.5,279.0L44.5,278.2L41.5,277.3L38.5,276.5L35.5,275.6Z" fill="#6966d3"/>
<path d="M35.5,270.0L38.5,269.1L41.5,268.3L44.5,267.4L47.6,266.6L50.6,265.7L53.6,264.9L56.6,264.1L59.6,263.4L62.6,262.8L65.6,262.2L68.6,261.7L71.7,261.3L74.7,260.9L77.7,260.5L80.7,260.2L83.7,259.9L86.7,259.6L89.7,259.4L92.7,259.2L95.8,259.0L98.8,258.8L101.8,258.8L104.8,258.7L107.8,258.7L110.8,258.7L113.8,258.7L116.8,258.8L119.9,258.9L122.9,258.9L125.9,259.0L128.9,259.1L131.9,259.1L134.9,259.1L137.9,259.1L140.9,259.0L144.0,258.8L147.0,258.6L150.0,258.2L153.0,257.8L156.0,257.2L159.0,256.5L162.0,255.6L165.0,254.6L168.1,253.4L171.1,252.1L174.1,250.7L177.1,249.2L180.1,247.6L183.1,245.9L186.1,244.2L189.1,242.5L192.2,240.7L195.2,239.0L198.2,237.3L201.2,235.6L204.2,234.0L207.2,232.4L210.2,230.9L213.2,229.5L216.3,228.2L219.3,227.1L222.3,226.1L225.3,225.4L228.3,225.1L231.3,225.0L234.3,225.4L237.3,226.1L240.4,227.1L243.4,228.4L246.4,229.9L249.4,231.6L252.4,233.4L255.4,235.3L258.4,237.1L261.4,238.9L264.5,240.7L267.5,242.5L270.5,244.3L273.5,246.0L276.5,247.7L279.5,249.3L282.5,250.7L285.5,252.1L288.6,253.4L291.6,254.6L294.6,255.8L297.6,257.0L300.6,258.1L303.6,259.1L306.6,259.9L309.6,260.6L312.7,261.2L315.7,261.6L318.7,261.8L321.7,262.0L324.7,262.0L327.7,261.9L330.7,261.7L333.8,261.3L336.8,260.7L339.8,260.0L342.8,259.2L345.8,258.1L348.8,256.9L351.8,255.5L354.8,253.8L357.9,252.0L360.9,250.0L363.9,247.8L366.9,245.5L369.9,243.0L372.9,240.4L375.9,237.6L378.9,234.8L382.0,231.8L385.0,228.9L388.0,225.8L391.0,222.8L394.0,219.7L397.0,216.7L400.0,213.7L403.0,210.7L406.1,207.7L409.1,204.8L412.1,201.9L415.1,199.1L418.1,196.5L421.1,194.0L424.1,191.7L427.1,189.5L430.2,187.4L433.2,185.4L436.2,183.5L439.2,181.7L442.2,180.1L445.2,178.8L448.2,177.6L451.2,176.6L454.3,175.8L457.3,175.2L460.3,174.7L463.3,174.5L466.3,174.5L469.3,174.8L472.3,175.1L475.3,175.6L478.4,176.2L481.4,176.7L484.4,177.4L487.4,178.3L490.4,179.5L493.4,180.9L496.4,182.6L499.4,184.5L502.5,186.5L505.5,188.5L508.5,190.5L511.5,192.7L514.5,194.9L517.5,197.3L520.5,199.8L523.5,202.4L526.6,205.0L529.6,207.5L532.6,210.0L535.6,212.3L538.6,214.6L541.6,216.8L544.6,218.8L547.6,220.9L550.7,222.9L553.7,225.0L556.7,227.2L559.7,229.2L562.7,231.2L565.7,232.9L568.7,234.3L571.7,235.5L574.8,236.6L577.8,237.6L580.8,238.6L583.8,239.5L586.8,240.4L589.8,241.2L592.8,241.9L595.8,242.6L598.9,243.2L601.9,243.8L604.9,244.4L607.9,244.9L610.9,245.5L613.9,246.0L616.9,246.6L619.9,247.2L623.0,247.7L626.0,248.2L629.0,248.7L632.0,249.2L632.0,249.3L635.0,250.2L638.1,251.1L641.1,252.0L644.2,253.0L647.2,254.0L650.2,254.9L653.3,255.9L656.3,256.9L659.3,257.9L662.4,258.9L665.4,260.0L668.5,261.1L671.5,262.3L674.5,263.4L677.6,264.6L680.6,265.7L683.7,266.9L686.7,268.0L689.7,269.1L692.8,270.2L695.8,271.3L698.8,272.4L701.9,273.4L704.9,274.4L708.0,275.5L711.0,276.5L714.0,277.7L717.1,278.9L720.1,280.1L723.2,281.3L726.2,282.5L729.2,283.6L732.3,284.7L735.3,285.9L738.3,287.0L741.4,288.1L744.4,289.3L747.5,290.4L750.5,291.6L753.5,292.7L756.6,293.8L759.6,295.0L762.7,296.2L765.7,297.4L768.7,298.7L771.8,300.0L774.8,301.4L777.8,302.9L780.9,304.4L783.9,306.1L787.0,307.7L790.0,309.4L790.0,309.4L787.0,308.6L784.0,307.8L781.0,307.0L778.0,306.1L775.0,305.2L772.0,304.2L769.0,303.0L766.0,301.8L762.9,300.5L759.9,299.3L756.9,298.2L753.9,297.1L750.9,296.0L747.9,295.0L744.9,294.0L741.9,293.1L738.9,292.2L735.9,291.3L732.9,290.5L729.9,289.8L726.9,289.1L723.9,288.4L720.9,287.8L717.9,287.2L714.9,286.7L711.8,286.3L708.8,286.0L705.8,285.7L702.8,285.5L699.8,285.4L696.8,285.4L693.8,285.4L690.8,285.6L687.8,285.8L684.8,286.0L681.8,286.3L678.8,286.7L675.8,287.1L672.8,287.6L669.8,288.1L666.8,288.7L663.7,289.2L660.7,289.9L657.7,290.5L654.7,291.2L651.7,291.9L648.7,292.7L645.7,293.5L642.7,294.2L639.7,294.9L636.7,295.5L633.7,296.1L630.7,296.6L627.7,297.1L624.7,297.6L621.7,298.1L618.7,298.7L615.7,299.2L612.6,299.8L609.6,300.4L606.6,300.9L603.6,301.5L600.6,302.1L597.6,302.6L594.6,303.3L591.6,304.0L588.6,304.7L585.6,305.6L582.6,306.5L579.6,307.4L576.6,308.4L573.6,309.4L570.6,310.5L567.6,311.8L564.6,313.3L561.5,315.1L558.5,317.1L555.5,319.3L552.5,321.4L549.5,323.5L546.5,325.5L543.5,327.5L540.5,329.6L537.5,331.8L534.5,334.1L531.5,336.5L528.5,339.0L525.5,341.5L522.5,344.1L519.5,346.7L516.5,349.1L513.5,351.5L510.4,353.7L507.4,355.8L504.4,357.8L501.4,359.8L498.4,361.7L495.4,363.6L492.4,365.2L489.4,366.5L486.4,367.6L483.4,368.4L480.4,369.1L477.4,369.6L474.4,370.1L471.4,370.6L468.4,370.9L465.4,371.1L462.3,371.0L459.3,370.7L456.3,370.3L453.3,369.6L450.3,368.7L447.3,367.7L444.3,366.4L441.3,365.0L438.3,363.4L435.3,361.6L432.3,359.6L429.3,357.6L426.3,355.5L423.3,353.3L420.3,350.9L417.3,348.4L414.3,345.7L411.2,342.9L408.2,340.0L405.2,337.1L402.2,334.1L399.2,331.1L396.2,328.1L393.2,325.1L390.2,322.0L387.2,319.0L384.2,316.0L381.2,313.0L378.2,310.1L375.2,307.3L372.2,304.6L369.2,302.0L366.2,299.5L363.2,297.2L360.1,295.1L357.1,293.1L354.1,291.4L351.1,289.8L348.1,288.4L345.1,287.2L342.1,286.2L339.1,285.4L336.1,284.7L333.1,284.2L330.1,283.9L327.1,283.6L324.1,283.6L321.1,283.6L318.1,283.8L315.1,284.1L312.0,284.5L309.0,285.1L306.0,285.8L303.0,286.7L300.0,287.7L297.0,288.8L294.0,290.0L291.0,291.2L288.0,292.5L285.0,293.7L282.0,295.1L279.0,296.6L276.0,298.2L273.0,299.9L270.0,301.6L267.0,303.4L264.0,305.2L260.9,307.0L257.9,308.8L254.9,310.6L251.9,312.5L248.9,314.3L245.9,315.9L242.9,317.4L239.9,318.7L236.9,319.6L233.9,320.3L230.9,320.6L227.9,320.5L224.9,320.1L221.9,319.3L218.9,318.4L215.9,317.2L212.9,315.9L209.8,314.5L206.8,313.0L203.8,311.4L200.8,309.8L197.8,308.1L194.8,306.4L191.8,304.7L188.8,302.9L185.8,301.2L182.8,299.5L179.8,297.9L176.8,296.3L173.8,294.7L170.8,293.3L167.8,292.0L164.8,290.9L161.8,289.9L158.7,289.0L155.7,288.3L152.7,287.8L149.7,287.3L146.7,287.0L143.7,286.8L140.7,286.6L137.7,286.5L134.7,286.5L131.7,286.5L128.7,286.5L125.7,286.6L122.7,286.7L119.7,286.7L116.7,286.8L113.7,286.9L110.6,286.9L107.6,286.9L104.6,286.9L101.6,286.8L98.6,286.8L95.6,286.6L92.6,286.4L89.6,286.2L86.6,286.0L83.6,285.7L80.6,285.4L77.6,285.1L74.6,284.7L71.6,284.3L68.6,283.9L65.6,283.4L62.6,282.8L59.5,282.2L56.5,281.5L53.5,280.7L50.5,279.9L47.5,279.0L44.5,278.2L41.5,277.3L38.5,276.5L35.5,275.6Z" fill="#6072d6"/>
<path d="M35.5,270.0L38.5,269.1L41.5,268.3L44.5,267.4L47.6,266.6L50.6,265.7L53.6,264.9L56.6,264.1L59.6,263.4L62.6,262.8L65.6,262.2L68.6,261.7L71.7,261.3L74.7,260.9L77.7,260.5L80.7,260.2L83.7,259.9L86.7,259.6L89.7,259.4L92.8,259.2L95.8,259.0L98.8,258.8L101.8,258.8L104.8,258.7L107.8,258.7L110.8,258.7L113.8,258.7L116.9,258.8L119.9,258.9L122.9,258.9L125.9,259.0L128.9,259.1L131.9,259.1L134.9,259.1L138.0,259.1L141.0,259.0L144.0,258.8L147.0,258.6L150.0,258.2L153.0,257.8L156.0,257.2L159.1,256.5L162.1,255.6L165.1,254.6L168.1,253.4L171.1,252.1L174.1,250.7L177.1,249.2L180.1,247.5L183.2,245.9L186.2,244.2L189.2,242.4L192.2,240.7L195.2,239.0L198.2,237.2L201.2,235.6L204.3,233.9L207.3,232.4L210.3,230.9L213.3,229.5L216.3,228.2L219.3,227.1L222.3,226.1L225.3,225.4L228.4,225.1L231.4,225.0L234.4,225.4L237.4,226.1L240.4,227.1L243.4,228.4L246.4,230.0L249.5,231.7L252.5,233.5L255.5,235.3L258.5,237.1L261.5,238.9L264.5,240.7L267.5,242.5L270.5,244.3L273.6,246.0L276.6,247.7L279.6,249.3L282.6,250.8L285.6,252.1L288.6,253.4L291.6,254.7L294.7,255.9L297.7,257.0L300.7,258.1L303.7,259.1L306.7,260.0L309.7,260.6L312.7,261.2L315.8,261.6L318.8,261.9L321.8,262.0L324.8,262.0L327.8,261.9L330.8,261.7L333.8,261.3L336.8,260.7L339.9,260.0L342.9,259.1L345.9,258.1L348.9,256.8L351.9,255.4L354.9,253.8L357.9,252.0L361.0,250.0L364.0,247.8L367.0,245.4L370.0,242.9L373.0,240.3L376.0,237.5L379.0,234.7L382.0,231.8L385.1,228.8L388.1,225.7L391.1,222.7L394.1,219.6L397.1,216.6L400.1,213.6L403.1,210.6L406.2,207.6L409.2,204.7L412.2,201.8L415.2,199.0L418.2,196.4L421.2,193.9L424.2,191.6L427.2,189.4L430.3,187.3L433.3,185.3L436.3,183.4L439.3,181.7L442.3,180.1L445.3,178.7L448.3,177.6L451.4,176.6L454.4,175.8L457.4,175.2L460.4,174.7L463.4,174.5L466.4,174.5L469.4,174.8L472.4,175.1L475.5,175.6L478.5,176.2L481.5,176.8L484.5,177.5L487.5,178.4L490.5,179.5L493.5,181.0L496.6,182.7L499.6,184.6L502.6,186.6L505.6,188.6L508.6,190.6L511.6,192.8L514.6,195.0L517.7,197.4L520.7,200.0L523.7,202.5L526.7,205.1L529.7,207.6L532.7,210.1L535.7,212.4L538.7,214.7L541.8,216.8L544.8,218.9L547.8,221.0L550.8,223.0L553.8,225.1L556.8,227.3L559.8,229.3L562.9,231.3L565.9,233.0L568.9,234.4L571.9,235.6L574.9,236.6L577.9,237.6L580.9,238.6L583.9,239.5L587.0,240.4L590.0,241.2L593.0,242.0L596.0,242.6L596.0,242.6L599.0,243.5L602.0,244.4L605.1,245.3L608.1,246.2L611.1,247.0L614.1,247.8L617.2,248.5L620.2,249.3L623.2,250.0L626.2,250.8L629.2,251.7L632.3,252.6L635.3,253.6L638.3,254.7L641.3,255.8L644.3,257.0L647.4,258.3L650.4,259.7L653.4,261.3L656.4,263.0L659.5,264.8L662.5,266.5L665.5,268.0L668.5,269.4L671.5,270.6L674.6,271.8L677.6,272.9L680.6,274.1L683.6,275.2L686.7,276.4L689.7,277.5L692.7,278.6L695.7,279.6L698.7,280.6L701.8,281.5L704.8,282.4L707.8,283.3L710.8,284.0L713.8,284.7L716.9,285.4L719.9,286.0L722.9,286.8L725.9,287.7L729.0,288.7L732.0,289.8L735.0,291.0L735.0,291.1L732.0,290.3L729.0,289.6L726.0,288.8L723.0,288.2L720.0,287.6L717.0,287.1L714.0,286.6L711.0,286.2L708.0,285.9L705.0,285.6L702.0,285.5L699.0,285.4L696.0,285.4L693.0,285.4L690.0,285.6L687.0,285.8L684.0,286.1L681.0,286.4L678.0,286.8L675.0,287.2L672.0,287.7L669.0,288.2L666.0,288.8L662.9,289.4L659.9,290.0L656.9,290.7L653.9,291.4L650.9,292.1L647.9,292.9L644.9,293.7L641.9,294.4L638.9,295.1L635.9,295.7L632.9,296.2L629.9,296.7L626.9,297.2L623.9,297.7L620.9,298.3L617.9,298.8L614.9,299.4L611.9,299.9L608.9,300.5L605.9,301.1L602.9,301.6L599.9,302.2L596.9,302.8L593.9,303.4L590.9,304.1L587.9,304.9L584.9,305.8L581.9,306.7L578.9,307.6L575.9,308.6L572.9,309.7L569.9,310.8L566.9,312.1L563.9,313.7L560.9,315.6L557.9,317.6L554.9,319.7L551.9,321.8L548.9,323.9L545.9,325.9L542.9,328.0L539.9,330.1L536.9,332.3L533.9,334.6L530.9,337.0L527.9,339.5L524.8,342.1L521.8,344.6L518.8,347.2L515.8,349.6L512.8,351.9L509.8,354.1L506.8,356.2L503.8,358.2L500.8,360.2L497.8,362.1L494.8,363.9L491.8,365.5L488.8,366.8L485.8,367.8L482.8,368.5L479.8,369.2L476.8,369.7L473.8,370.2L470.8,370.7L467.8,371.0L464.8,371.1L461.8,371.0L458.8,370.7L455.8,370.1L452.8,369.4L449.8,368.5L446.8,367.5L443.8,366.2L440.8,364.7L437.8,363.1L434.8,361.3L431.8,359.3L428.8,357.3L425.8,355.1L422.8,352.9L419.8,350.5L416.8,348.0L413.8,345.3L410.8,342.5L407.8,339.6L404.8,336.6L401.8,333.6L398.8,330.6L395.8,327.6L392.8,324.6L389.8,321.6L386.8,318.5L383.7,315.5L380.7,312.6L377.7,309.7L374.7,306.9L371.7,304.2L368.7,301.6L365.7,299.2L362.7,296.9L359.7,294.8L356.7,292.9L353.7,291.1L350.7,289.6L347.7,288.3L344.7,287.1L341.7,286.1L338.7,285.3L335.7,284.7L332.7,284.2L329.7,283.8L326.7,283.6L323.7,283.6L320.7,283.6L317.7,283.8L314.7,284.1L311.7,284.6L308.7,285.2L305.7,285.9L302.7,286.8L299.7,287.8L296.7,288.9L293.7,290.1L290.7,291.3L287.7,292.6L284.7,293.9L281.7,295.3L278.7,296.8L275.7,298.4L272.7,300.1L269.7,301.8L266.7,303.6L263.7,305.4L260.7,307.2L257.7,309.0L254.7,310.8L251.7,312.6L248.7,314.4L245.7,316.1L242.6,317.5L239.6,318.8L236.6,319.7L233.6,320.3L230.6,320.6L227.6,320.5L224.6,320.0L221.6,319.3L218.6,318.3L215.6,317.1L212.6,315.8L209.6,314.4L206.6,312.9L203.6,311.3L200.6,309.7L197.6,308.0L194.6,306.3L191.6,304.6L188.6,302.8L185.6,301.1L182.6,299.4L179.6,297.8L176.6,296.2L173.6,294.7L170.6,293.3L167.6,292.0L164.6,290.8L161.6,289.8L158.6,289.0L155.6,288.3L152.6,287.7L149.6,287.3L146.6,287.0L143.6,286.7L140.6,286.6L137.6,286.5L134.6,286.5L131.6,286.5L128.6,286.5L125.6,286.6L122.6,286.7L119.6,286.7L116.6,286.8L113.6,286.9L110.6,286.9L107.6,286.9L104.5,286.9L101.5,286.8L98.5,286.7L95.5,286.6L92.5,286.4L89.5,286.2L86.5,286.0L83.5,285.7L80.5,285.4L77.5,285.1L74.5,284.7L71.5,284.3L68.5,283.9L65.5,283.4L62.5,282.8L59.5,282.2L56.5,281.5L53.5,280.7L50.5,279.8L47.5,279.0L44.5,278.2L41.5,277.3L38.5,276.5L35.5,275.6Z" fill="#547cd9"/>
<path d="M35.5,270.0L38.5,269.1L41.5,268.3L44.5,267.4L47.6,266.6L50.6,265.7L53.6,264.9L56.6,264.1L59.6,263.4L62.6,262.8L65.7,262.2L68.7,261.7L71.7,261.3L74.7,260.9L77.7,260.5L80.7,260.2L83.8,259.9L86.8,259.6L89.8,259.4L92.8,259.1L95.8,259.0L98.8,258.8L101.9,258.8L104.9,258.7L107.9,258.7L110.9,258.7L113.9,258.8L116.9,258.8L120.0,258.9L123.0,259.0L126.0,259.0L129.0,259.1L132.0,259.1L135.0,259.1L138.1,259.1L141.1,259.0L144.1,258.8L147.1,258.6L150.1,258.2L153.1,257.8L156.2,257.2L159.2,256.5L162.2,255.6L165.2,254.6L168.2,253.4L171.2,252.1L174.3,250.6L177.3,249.1L180.3,247.5L183.3,245.8L186.3,244.1L189.3,242.4L192.4,240.6L195.4,238.9L198.4,237.2L201.4,235.5L204.4,233.8L207.4,232.3L210.5,230.8L213.5,229.4L216.5,228.1L219.5,227.0L222.5,226.1L225.5,225.4L228.6,225.0L231.6,225.1L234.6,225.4L237.6,226.2L240.6,227.2L243.6,228.5L246.7,230.1L249.7,231.8L252.7,233.6L255.7,235.4L258.7,237.3L261.7,239.1L264.8,240.9L267.8,242.7L270.8,244.4L273.8,246.2L276.8,247.8L279.8,249.4L282.8,250.9L285.9,252.2L288.9,253.5L291.9,254.8L294.9,256.0L297.9,257.1L300.9,258.2L304.0,259.2L307.0,260.0L310.0,260.7L313.0,261.2L316.0,261.6L319.0,261.9L322.1,262.0L325.1,262.0L328.1,261.9L331.1,261.6L334.1,261.2L337.1,260.7L340.2,259.9L343.2,259.0L346.2,258.0L349.2,256.7L352.2,255.3L355.2,253.6L358.3,251.8L361.3,249.7L364.3,247.5L367.3,245.2L370.3,242.6L373.3,240.0L376.4,237.2L379.4,234.4L382.4,231.4L385.4,228.4L388.4,225.4L391.4,222.3L394.5,219.3L397.5,216.2L400.5,213.2L403.5,210.2L406.5,207.2L409.5,204.3L412.6,201.4L415.6,198.7L418.6,196.1L421.6,193.6L424.6,191.3L427.6,189.1L430.7,187.1L433.7,185.1L436.7,183.2L439.7,181.4L442.7,179.9L445.7,178.6L448.8,177.4L451.8,176.5L454.8,175.7L457.8,175.1L460.8,174.7L463.8,174.5L466.9,174.6L469.9,174.8L472.9,175.2L475.9,175.7L478.9,176.3L481.9,176.9L485.0,177.6L488.0,178.5L491.0,179.7L494.0,181.2L494.0,181.8L497.0,184.0L500.0,186.2L503.1,188.4L506.1,190.6L509.1,192.8L512.1,195.2L515.1,197.6L518.1,200.2L521.2,202.9L524.2,205.8L527.2,208.7L530.2,211.7L533.2,214.6L536.2,217.4L539.3,220.1L542.3,222.7L545.3,225.4L548.3,228.1L551.3,231.0L554.3,234.0L557.4,237.3L560.4,240.6L563.4,244.0L566.4,247.3L569.4,250.5L572.4,253.6L575.5,256.5L578.5,259.3L581.5,262.0L584.5,264.6L587.5,267.1L590.5,269.7L593.6,272.2L596.6,274.5L599.6,276.6L602.6,278.6L605.6,280.3L608.6,282.0L611.7,283.5L614.7,285.0L617.7,286.3L620.7,287.4L623.7,288.3L626.7,289.0L629.8,289.5L632.8,289.9L635.8,290.2L638.8,290.3L641.8,290.4L644.8,290.4L647.9,290.2L650.9,290.0L653.9,289.5L656.9,289.0L659.9,288.5L662.9,288.0L666.0,287.7L669.0,287.5L672.0,287.4L672.0,287.7L669.0,288.2L666.0,288.8L663.0,289.4L660.0,290.0L657.0,290.7L654.0,291.3L651.0,292.1L648.0,292.9L645.0,293.6L642.0,294.4L639.0,295.1L636.0,295.7L633.0,296.2L630.0,296.7L627.0,297.2L624.0,297.7L621.0,298.2L618.0,298.8L615.0,299.4L612.0,299.9L609.0,300.5L605.9,301.0L602.9,301.6L599.9,302.2L596.9,302.8L593.9,303.4L590.9,304.1L587.9,304.9L584.9,305.8L581.9,306.7L578.9,307.6L575.9,308.6L572.9,309.6L569.9,310.8L566.9,312.1L563.9,313.7L560.9,315.6L557.9,317.6L554.9,319.7L551.9,321.8L548.9,323.9L545.9,325.9L542.9,328.0L539.9,330.1L536.9,332.3L533.9,334.6L530.9,337.0L527.9,339.5L524.9,342.0L521.9,344.6L518.9,347.1L515.9,349.6L512.9,351.9L509.9,354.1L506.9,356.2L503.9,358.2L500.9,360.2L497.9,362.1L494.9,363.9L491.9,365.5L488.9,366.8L485.9,367.8L482.9,368.5L479.8,369.2L476.8,369.7L473.8,370.2L470.8,370.7L467.8,371.0L464.8,371.1L461.8,371.0L458.8,370.7L455.8,370.2L452.8,369.4L449.8,368.6L446.8,367.5L443.8,366.2L440.8,364.8L437.8,363.1L434.8,361.3L431.8,359.3L428.8,357.3L425.8,355.1L422.8,352.9L419.8,350.5L416.8,348.0L413.8,345.3L410.8,342.5L407.8,339.6L404.8,336.6L401.8,333.7L398.8,330.7L395.8,327.7L392.8,324.6L389.8,321.6L386.8,318.6L383.8,315.6L380.8,312.6L377.8,309.7L374.8,306.9L371.8,304.2L368.8,301.6L365.8,299.2L362.8,296.9L359.8,294.8L356.8,292.9L353.8,291.2L350.7,289.6L347.7,288.3L344.7,287.1L341.7,286.1L338.7,285.3L335.7,284.7L332.7,284.2L329.7,283.8L326.7,283.6L323.7,283.6L320.7,283.6L317.7,283.8L314.7,284.1L311.7,284.6L308.7,285.2L305.7,285.9L302.7,286.8L299.7,287.8L296.7,288.9L293.7,290.1L290.7,291.3L287.7,292.6L284.7,293.9L281.7,295.3L278.7,296.8L275.7,298.4L272.7,300.1L269.7,301.8L266.7,303.6L263.7,305.4L260.7,307.2L257.7,309.0L254.7,310.8L251.7,312.6L248.7,314.4L245.7,316.1L242.7,317.5L239.7,318.8L236.7,319.7L233.7,320.3L230.7,320.6L227.7,320.5L224.6,320.0L221.6,319.3L218.6,318.3L215.6,317.1L212.6,315.8L209.6,314.4L206.6,312.9L203.6,311.3L200.6,309.7L197.6,308.0L194.6,306.3L191.6,304.6L188.6,302.8L185.6,301.1L182.6,299.4L179.6,297.8L176.6,296.2L173.6,294.7L170.6,293.3L167.6,292.0L164.6,290.8L161.6,289.8L158.6,289.0L155.6,288.3L152.6,287.7L149.6,287.3L146.6,287.0L143.6,286.8L140.6,286.6L137.6,286.5L134.6,286.5L131.6,286.5L128.6,286.5L125.6,286.6L122.6,286.7L119.6,286.7L116.6,286.8L113.6,286.9L110.6,286.9L107.6,286.9L104.6,286.9L101.6,286.8L98.5,286.7L95.5,286.6L92.5,286.4L89.5,286.2L86.5,286.0L83.5,285.7L80.5,285.4L77.5,285.1L74.5,284.7L71.5,284.3L68.5,283.9L65.5,283.4L62.5,282.8L59.5,282.2L56.5,281.5L53.5,280.7L50.5,279.8L47.5,279.0L44.5,278.2L41.5,277.3L38.5,276.5L35.5,275.6Z" fill="#4484dc"/>
<path d="M35.5,270.0L38.5,269.1L41.5,268.3L44.5,267.4L47.5,266.6L50.5,265.8L53.5,264.9L56.5,264.1L59.5,263.4L62.5,262.8L65.5,262.2L68.5,261.7L71.5,261.3L74.5,260.9L77.5,260.5L80.6,260.2L83.6,259.9L86.6,259.6L89.6,259.4L92.6,259.2L95.6,259.0L98.6,258.8L101.6,258.8L104.6,258.7L107.6,258.7L110.6,258.7L113.6,258.7L116.6,258.8L119.6,258.9L122.6,258.9L125.6,259.0L128.6,259.1L131.6,259.1L134.6,259.1L137.6,259.1L140.6,259.0L143.6,258.8L146.6,258.6L149.6,258.3L152.6,257.9L155.6,257.3L158.6,256.6L161.6,255.8L164.7,254.8L167.7,253.6L170.7,252.3L173.7,250.9L176.7,249.4L179.7,247.8L182.7,246.2L185.7,244.5L188.7,242.7L191.7,241.0L194.7,239.3L197.7,237.5L200.7,235.9L203.7,234.2L206.7,232.7L209.7,231.2L212.7,229.8L215.7,228.5L218.7,227.3L221.7,226.3L224.7,225.6L227.7,225.1L230.7,225.0L233.7,225.3L236.7,225.9L239.7,226.9L242.7,228.1L245.7,229.6L248.8,231.2L251.8,233.0L254.8,234.9L257.8,236.7L260.8,238.5L263.8,240.3L266.8,242.1L269.8,243.8L272.8,245.6L275.8,247.3L278.8,248.9L281.8,250.4L284.8,251.8L287.8,253.1L290.8,254.3L293.8,255.5L296.8,256.7L299.8,257.8L302.8,258.8L305.8,259.7L308.8,260.5L311.8,261.0L314.8,261.5L317.8,261.8L320.8,262.0L323.8,262.0L326.8,262.0L329.8,261.8L332.8,261.4L335.9,260.9L338.9,260.3L341.9,259.4L344.9,258.5L347.9,257.3L350.9,255.9L353.9,254.4L356.9,252.6L359.9,250.7L362.9,248.6L365.9,246.3L368.9,243.9L371.9,241.3L374.9,238.6L377.9,235.8L380.9,232.9L383.9,229.9L386.9,226.9L389.9,223.9L392.9,220.8L395.9,217.8L398.9,214.8L401.9,211.8L404.9,208.8L407.9,205.9L410.9,203.0L413.9,200.2L416.9,197.5L420.0,195.0L423.0,192.6L426.0,190.3L429.0,188.2L432.0,186.2L435.0,184.2L438.0,182.4L441.0,180.8L444.0,179.3L447.0,178.1L450.0,177.0L453.0,176.1L456.0,175.4L459.0,174.9L462.0,174.6L462.0,174.7L465.0,175.3L468.0,176.0L471.0,176.8L474.0,177.8L477.0,178.8L480.0,180.0L483.0,181.2L486.0,182.6L489.0,184.3L492.0,186.5L495.0,189.2L498.0,192.4L501.0,195.9L504.0,199.8L507.0,204.0L510.0,208.6L513.0,213.6L516.0,219.1L519.0,224.8L522.0,230.7L525.0,236.4L528.0,241.8L531.0,247.0L534.0,252.0L537.0,256.7L540.0,261.2L543.0,265.4L546.0,269.2L549.0,272.6L552.0,275.8L555.0,278.7L558.0,281.6L561.0,284.4L564.0,287.0L567.0,289.2L570.0,291.0L573.0,292.6L576.0,294.0L579.0,295.4L582.0,296.8L585.0,298.1L588.0,299.3L591.0,300.4L594.0,301.3L597.0,301.9L600.0,302.0L603.0,301.6L606.0,301.0L606.0,301.0L603.0,301.6L600.0,302.2L597.0,302.8L594.0,303.4L591.0,304.1L588.0,304.9L585.0,305.7L582.0,306.7L579.0,307.6L576.0,308.6L573.0,309.6L570.0,310.8L567.0,312.1L564.0,313.7L561.0,315.5L558.0,317.6L555.0,319.7L552.0,321.8L548.9,323.8L545.9,325.9L542.9,327.9L539.9,330.0L536.9,332.3L533.9,334.6L530.9,337.0L527.9,339.4L524.9,342.0L521.9,344.6L518.9,347.1L515.9,349.6L512.9,351.9L509.9,354.1L506.9,356.2L503.9,358.2L500.9,360.1L497.9,362.1L494.9,363.9L491.9,365.4L488.9,366.7L485.9,367.7L482.9,368.5L479.9,369.2L476.9,369.7L473.9,370.2L470.9,370.7L467.9,371.0L464.9,371.1L461.9,371.0L458.9,370.7L455.9,370.2L452.9,369.4L449.9,368.6L446.9,367.5L443.9,366.2L440.9,364.8L437.9,363.1L434.8,361.3L431.8,359.3L428.8,357.3L425.8,355.2L422.8,352.9L419.8,350.6L416.8,348.0L413.8,345.3L410.8,342.5L407.8,339.6L404.8,336.7L401.8,333.7L398.8,330.7L395.8,327.7L392.8,324.7L389.8,321.6L386.8,318.6L383.8,315.6L380.8,312.6L377.8,309.7L374.8,306.9L371.8,304.2L368.8,301.7L365.8,299.2L362.8,297.0L359.8,294.8L356.8,292.9L353.8,291.2L350.8,289.6L347.8,288.3L344.8,287.1L341.8,286.1L338.8,285.3L335.8,284.7L332.8,284.2L329.8,283.8L326.8,283.6L323.8,283.6L320.8,283.6L317.7,283.8L314.7,284.1L311.7,284.6L308.7,285.2L305.7,285.9L302.7,286.8L299.7,287.8L296.7,288.9L293.7,290.1L290.7,291.3L287.7,292.6L284.7,293.9L281.7,295.3L278.7,296.8L275.7,298.4L272.7,300.1L269.7,301.8L266.7,303.6L263.7,305.4L260.7,307.2L257.7,309.0L254.7,310.8L251.7,312.6L248.7,314.4L245.7,316.0L242.7,317.5L239.7,318.7L236.7,319.7L233.7,320.3L230.7,320.6L227.7,320.5L224.7,320.0L221.7,319.3L218.7,318.3L215.7,317.1L212.7,315.8L209.7,314.4L206.7,312.9L203.6,311.3L200.6,309.7L197.6,308.0L194.6,306.3L191.6,304.6L188.6,302.8L185.6,301.1L182.6,299.4L179.6,297.8L176.6,296.2L173.6,294.7L170.6,293.3L167.6,292.0L164.6,290.8L161.6,289.8L158.6,289.0L155.6,288.3L152.6,287.7L149.6,287.3L146.6,287.0L143.6,286.8L140.6,286.6L137.6,286.5L134.6,286.5L131.6,286.5L128.6,286.5L125.6,286.6L122.6,286.7L119.6,286.7L116.6,286.8L113.6,286.9L110.6,286.9L107.6,286.9L104.6,286.9L101.6,286.8L98.6,286.7L95.6,286.6L92.5,286.4L89.5,286.2L86.5,286.0L83.5,285.7L80.5,285.4L77.5,285.1L74.5,284.7L71.5,284.3L68.5,283.9L65.5,283.4L62.5,282.8L59.5,282.2L56.5,281.5L53.5,280.7L50.5,279.8L47.5,279.0L44.5,278.2L41.5,277.3L38.5,276.5L35.5,275.6Z" fill="#2d8fe1"/>
<path d="M35.5,270.0L38.5,269.1L41.5,268.3L44.5,267.4L47.5,266.6L50.5,265.8L53.5,264.9L56.5,264.1L59.5,263.4L62.5,262.8L65.5,262.2L68.5,261.7L71.6,261.3L74.6,260.9L77.6,260.5L80.6,260.2L83.6,259.9L86.6,259.6L89.6,259.4L92.6,259.2L95.6,259.0L98.6,258.8L101.6,258.8L104.6,258.7L107.6,258.7L110.6,258.7L113.6,258.7L116.6,258.8L119.6,258.9L122.6,258.9L125.6,259.0L128.6,259.1L131.6,259.1L134.6,259.1L137.7,259.1L140.7,259.0L143.7,258.8L146.7,258.6L149.7,258.3L152.7,257.8L155.7,257.3L158.7,256.6L161.7,255.8L164.7,254.8L167.7,253.6L170.7,252.3L173.7,250.9L176.7,249.4L179.7,247.8L182.7,246.1L185.7,244.4L188.7,242.7L191.7,241.0L194.7,239.2L197.7,237.5L200.7,235.8L203.8,234.2L206.8,232.6L209.8,231.1L212.8,229.7L215.8,228.4L218.8,227.3L221.8,226.3L224.8,225.5L227.8,225.1L230.8,225.0L233.8,225.3L236.8,225.9L239.8,226.9L242.8,228.1L245.8,229.6L248.8,231.3L251.8,233.1L254.8,234.9L257.8,236.7L260.8,238.5L263.8,240.3L266.8,242.1L269.8,243.9L272.9,245.6L275.9,247.3L278.9,248.9L281.9,250.4L284.9,251.8L287.9,253.1L290.9,254.3L293.9,255.6L296.9,256.7L299.9,257.9L302.9,258.9L305.9,259.7L308.9,260.5L311.9,261.0L314.9,261.5L317.9,261.8L320.9,262.0L323.9,262.0L326.9,262.0L329.9,261.8L332.9,261.4L335.9,260.9L339.0,260.2L342.0,259.4L345.0,258.4L348.0,257.2L351.0,255.9L354.0,254.3L357.0,252.6L360.0,250.6L363.0,248.5L366.0,246.2L369.0,243.8L372.0,241.2L372.0,241.3L375.0,238.6L378.0,235.9L381.1,233.3L384.1,230.8L387.1,228.3L390.1,226.1L393.1,224.1L396.1,222.5L399.2,221.2L402.2,220.2L405.2,219.5L408.2,218.9L411.2,218.6L414.3,218.5L417.3,218.7L420.3,219.2L423.3,220.2L426.3,221.8L429.4,224.3L432.4,227.9L435.4,232.4L438.4,237.6L441.4,243.2L444.4,249.1L447.5,255.3L450.5,261.7L453.5,268.2L456.5,274.7L459.5,281.2L462.6,287.5L465.6,293.6L468.6,299.5L471.6,305.1L474.6,310.3L477.6,315.2L480.7,319.8L483.7,324.0L486.7,327.7L489.7,331.0L492.7,333.7L495.8,336.0L498.8,337.8L501.8,339.2L504.8,340.3L507.8,341.0L510.9,341.4L513.9,341.6L516.9,341.5L519.9,341.1L522.9,340.3L525.9,339.0L529.0,337.3L532.0,335.2L535.0,333.0L535.0,333.7L532.0,336.1L529.0,338.6L526.0,341.1L523.0,343.7L520.0,346.2L516.9,348.7L513.9,351.1L510.9,353.4L507.9,355.5L504.9,357.5L501.9,359.5L498.9,361.4L495.9,363.3L492.9,365.0L489.9,366.4L486.9,367.5L483.8,368.3L480.8,369.0L477.8,369.5L474.8,370.1L471.8,370.5L468.8,370.9L465.8,371.1L462.8,371.1L459.8,370.8L456.8,370.3L453.8,369.7L450.7,368.8L447.7,367.8L444.7,366.6L441.7,365.2L438.7,363.6L435.7,361.8L432.7,359.9L429.7,357.9L426.7,355.8L423.7,353.6L420.7,351.2L417.6,348.7L414.6,346.1L411.6,343.3L408.6,340.4L405.6,337.5L402.6,334.5L399.6,331.5L396.6,328.5L393.6,325.4L390.6,322.4L387.6,319.4L384.5,316.3L381.5,313.4L378.5,310.4L375.5,307.6L372.5,304.9L369.5,302.3L366.5,299.8L363.5,297.5L360.5,295.3L357.5,293.3L354.5,291.5L351.4,290.0L348.4,288.6L345.4,287.4L342.4,286.3L339.4,285.5L336.4,284.8L333.4,284.3L330.4,283.9L327.4,283.7L324.4,283.6L321.4,283.6L318.3,283.8L315.3,284.1L312.3,284.5L309.3,285.0L306.3,285.7L303.3,286.6L300.3,287.6L297.3,288.7L294.3,289.9L291.3,291.1L288.3,292.3L285.2,293.6L282.2,295.0L279.2,296.5L276.2,298.1L273.2,299.8L270.2,301.5L267.2,303.3L264.2,305.1L261.2,306.9L258.2,308.7L255.2,310.5L252.2,312.3L249.1,314.1L246.1,315.8L243.1,317.3L240.1,318.6L237.1,319.6L234.1,320.2L231.1,320.6L228.1,320.5L225.1,320.1L222.1,319.4L219.1,318.4L216.0,317.3L213.0,316.0L210.0,314.6L207.0,313.1L204.0,311.5L201.0,309.9L198.0,308.2L195.0,306.5L192.0,304.8L189.0,303.0L186.0,301.3L182.9,299.6L179.9,297.9L176.9,296.3L173.9,294.8L170.9,293.4L167.9,292.1L164.9,290.9L161.9,289.9L158.9,289.1L155.9,288.3L152.9,287.8L149.8,287.3L146.8,287.0L143.8,286.8L140.8,286.6L137.8,286.5L134.8,286.5L131.8,286.5L128.8,286.5L125.8,286.6L122.8,286.7L119.8,286.7L116.7,286.8L113.7,286.9L110.7,286.9L107.7,286.9L104.7,286.9L101.7,286.8L98.7,286.8L95.7,286.6L92.7,286.4L89.7,286.2L86.7,286.0L83.6,285.7L80.6,285.4L77.6,285.1L74.6,284.7L71.6,284.3L68.6,283.9L65.6,283.4L62.6,282.8L59.6,282.2L56.6,281.5L53.6,280.7L50.5,279.9L47.5,279.0L44.5,278.2L41.5,277.3L38.5,276.5L35.5,275.6Z" fill="#009ce3"/>
<path d="M35.5,270.0L38.5,269.1L41.6,268.3L44.6,267.4L47.6,266.6L50.6,265.7L53.7,264.9L56.7,264.1L59.7,263.4L62.8,262.8L65.8,262.2L68.8,261.7L71.8,261.2L74.9,260.8L77.9,260.5L80.9,260.2L83.9,259.9L87.0,259.6L90.0,259.3L93.0,259.1L96.1,259.0L99.1,258.8L102.1,258.7L105.1,258.7L108.2,258.7L111.2,258.7L114.2,258.8L117.2,258.8L120.3,258.9L123.3,259.0L126.3,259.0L129.4,259.1L132.4,259.1L135.4,259.1L138.4,259.1L141.5,259.0L144.5,258.8L147.5,258.5L150.6,258.2L153.6,257.7L156.6,257.1L159.6,256.3L162.7,255.4L165.7,254.4L168.7,253.2L171.8,251.8L174.8,250.4L177.8,248.8L180.8,247.2L183.9,245.5L186.9,243.8L189.9,242.0L192.9,240.3L196.0,238.5L199.0,236.8L202.0,235.1L205.1,233.5L208.1,232.0L211.1,230.5L214.1,229.1L217.2,227.9L220.2,226.8L223.2,225.9L226.2,225.3L229.3,225.0L232.3,225.1L235.3,225.6L238.4,226.4L241.4,227.5L244.4,228.9L247.4,230.5L250.5,232.3L253.5,234.1L256.5,235.9L259.6,237.8L262.6,239.6L265.6,241.4L268.6,243.2L271.7,244.9L274.7,246.7L277.7,248.3L280.8,249.9L283.8,251.3L286.8,252.6L289.8,253.9L292.9,255.1L295.9,256.4L298.9,257.5L301.9,258.6L305.0,259.5L308.0,260.3L308.0,260.4L311.0,260.9L314.0,261.4L317.0,261.8L320.0,262.3L323.0,262.8L326.0,263.3L329.0,263.9L332.0,264.8L335.0,265.7L338.0,266.9L341.0,268.3L344.0,269.8L347.0,271.5L350.0,273.4L353.0,275.5L356.0,277.8L359.0,280.2L362.0,282.7L365.0,285.3L368.0,287.9L371.0,290.6L374.0,293.3L377.0,296.0L380.0,298.8L383.0,301.6L386.0,304.6L389.0,307.6L392.0,310.7L395.0,313.9L398.0,317.2L401.0,320.5L404.0,323.9L407.0,327.2L410.0,330.6L413.0,333.8L416.0,337.0L419.0,340.0L422.0,342.8L425.0,345.6L428.0,348.3L431.0,350.9L434.0,353.4L437.0,355.9L440.0,358.2L443.0,360.3L446.0,362.2L449.0,363.9L452.0,365.5L455.0,367.0L455.0,370.0L452.0,369.2L449.0,368.3L445.9,367.1L442.9,365.8L439.9,364.3L436.9,362.5L433.9,360.7L430.9,358.7L427.8,356.6L424.8,354.4L421.8,352.1L418.8,349.7L415.8,347.1L412.7,344.3L409.7,341.5L406.7,338.5L403.7,335.6L400.7,332.6L397.7,329.5L394.6,326.5L391.6,323.5L388.6,320.4L385.6,317.4L382.6,314.4L379.6,311.4L376.5,308.5L373.5,305.8L370.5,303.1L367.5,300.6L364.5,298.2L361.4,296.0L358.4,293.9L355.4,292.1L352.4,290.4L349.4,289.0L346.4,287.7L343.3,286.6L340.3,285.7L337.3,285.0L334.3,284.4L331.3,284.0L328.2,283.7L325.2,283.6L322.2,283.6L319.2,283.7L316.2,284.0L313.2,284.4L310.1,284.9L307.1,285.5L304.1,286.4L301.1,287.3L298.1,288.4L295.0,289.6L292.0,290.8L289.0,292.0L286.0,293.3L283.0,294.7L280.0,296.1L276.9,297.7L273.9,299.4L270.9,301.1L267.9,302.9L264.9,304.7L261.8,306.5L258.8,308.3L255.8,310.1L252.8,311.9L249.8,313.8L246.8,315.5L243.7,317.0L240.7,318.3L237.7,319.4L234.7,320.1L231.7,320.5L228.7,320.6L225.6,320.2L222.6,319.5L219.6,318.6L216.6,317.5L213.6,316.2L210.5,314.8L207.5,313.4L204.5,311.8L201.5,310.2L198.5,308.5L195.5,306.8L192.4,305.0L189.4,303.3L186.4,301.6L183.4,299.8L180.4,298.2L177.3,296.6L174.3,295.0L171.3,293.6L168.3,292.3L165.3,291.1L162.3,290.0L159.2,289.1L156.2,288.4L153.2,287.8L150.2,287.4L147.2,287.0L144.1,286.8L141.1,286.6L138.1,286.5L135.1,286.5L132.1,286.5L129.1,286.5L126.0,286.6L123.0,286.6L120.0,286.7L117.0,286.8L114.0,286.8L110.9,286.9L107.9,286.9L104.9,286.9L101.9,286.9L98.9,286.8L95.9,286.6L92.8,286.5L89.8,286.2L86.8,286.0L83.8,285.7L80.8,285.4L77.8,285.1L74.7,284.7L71.7,284.3L68.7,283.9L65.7,283.4L62.7,282.8L59.6,282.2L56.6,281.5L53.6,280.7L50.6,279.9L47.6,279.0L44.6,278.2L41.5,277.3L38.5,276.5L35.5,275.6Z" fill="#00a5e3"/>
<path d="M35.5,270.0L38.5,269.1L41.6,268.3L44.6,267.4L47.6,266.6L50.7,265.7L53.7,264.9L56.7,264.1L59.8,263.4L62.8,262.7L65.8,262.2L68.9,261.7L71.9,261.2L74.9,260.8L78.0,260.5L81.0,260.2L84.0,259.9L87.1,259.6L90.1,259.3L93.1,259.1L96.2,259.0L99.2,258.8L102.2,258.7L105.3,258.7L108.3,258.7L111.3,258.7L114.4,258.8L117.4,258.8L120.4,258.9L123.5,259.0L126.5,259.0L129.5,259.1L132.6,259.1L135.6,259.1L138.6,259.1L141.7,259.0L144.7,258.8L147.7,258.5L150.8,258.1L153.8,257.7L156.8,257.0L159.8,256.3L162.9,255.4L165.9,254.3L168.9,253.1L172.0,251.7L175.0,250.2L178.0,248.7L181.1,247.0L184.1,245.3L187.1,243.6L190.2,241.9L193.2,240.1L196.2,238.4L199.3,236.7L202.3,235.0L205.3,233.4L208.4,231.8L211.4,230.3L214.4,229.0L217.5,227.7L220.5,226.7L223.5,225.8L226.6,225.2L229.6,225.0L232.6,225.1L235.7,225.7L238.7,226.5L241.7,227.7L244.8,229.1L247.8,230.7L250.8,232.5L253.9,234.3L256.9,236.2L259.9,238.0L263.0,239.8L266.0,241.6L266.0,241.8L269.0,243.4L272.0,245.2L275.1,246.9L278.1,248.5L281.1,250.0L284.1,251.5L287.2,252.8L290.2,254.1L293.2,255.3L296.2,257.0L299.2,258.7L302.3,260.3L305.3,262.0L308.3,263.6L311.3,265.2L314.4,266.7L317.4,268.3L320.4,269.8L323.4,271.3L326.4,272.8L329.5,274.3L332.5,275.8L335.5,277.3L338.5,278.9L341.6,280.4L344.6,282.1L347.6,283.8L350.6,285.5L353.6,287.4L356.7,289.4L359.7,291.5L362.7,293.7L365.7,296.2L368.8,298.7L371.8,301.5L374.8,304.5L377.8,307.5L380.8,310.7L383.9,313.9L386.9,317.1L389.9,320.5L392.9,323.9L396.0,327.4L399.0,330.9L402.0,333.9L402.0,333.9L399.0,330.9L396.0,327.9L393.0,324.8L390.0,321.8L387.0,318.8L384.0,315.8L381.0,312.8L378.0,309.9L375.0,307.1L372.0,304.4L369.0,301.8L366.0,299.4L362.9,297.1L359.9,294.9L356.9,293.0L353.9,291.3L350.9,289.7L347.9,288.3L344.9,287.2L341.9,286.2L338.9,285.3L335.9,284.7L332.9,284.2L329.9,283.8L326.9,283.6L323.9,283.6L320.9,283.6L317.9,283.8L314.9,284.1L311.9,284.6L308.9,285.1L305.9,285.9L302.9,286.7L299.9,287.8L296.9,288.9L293.9,290.1L290.8,291.3L287.8,292.5L284.8,293.8L281.8,295.2L278.8,296.7L275.8,298.3L272.8,300.0L269.8,301.7L266.8,303.5L263.8,305.3L260.8,307.1L257.8,308.9L254.8,310.7L251.8,312.6L248.8,314.3L245.8,316.0L242.8,317.5L239.8,318.7L236.8,319.7L233.8,320.3L230.8,320.6L227.8,320.5L224.8,320.1L221.8,319.3L218.8,318.3L215.7,317.2L212.7,315.9L209.7,314.5L206.7,313.0L203.7,311.4L200.7,309.8L197.7,308.1L194.7,306.4L191.7,304.6L188.7,302.9L185.7,301.2L182.7,299.5L179.7,297.8L176.7,296.2L173.7,294.7L170.7,293.3L167.7,292.0L164.7,290.8L161.7,289.8L158.7,289.0L155.7,288.3L152.7,287.8L149.7,287.3L146.7,287.0L143.6,286.8L140.6,286.6L137.6,286.5L134.6,286.5L131.6,286.5L128.6,286.5L125.6,286.6L122.6,286.7L119.6,286.7L116.6,286.8L113.6,286.9L110.6,286.9L107.6,286.9L104.6,286.9L101.6,286.8L98.6,286.8L95.6,286.6L92.6,286.4L89.6,286.2L86.6,286.0L83.6,285.7L80.6,285.4L77.6,285.1L74.6,284.7L71.5,284.3L68.5,283.9L65.5,283.4L62.5,282.8L59.5,282.2L56.5,281.5L53.5,280.7L50.5,279.8L47.5,279.0L44.5,278.2L41.5,277.3L38.5,276.5L35.5,275.6Z" fill="#00aee6"/>
<path d="M35.5,270.0L38.5,269.1L41.6,268.3L44.6,267.4L47.7,266.6L50.7,265.7L53.8,264.9L56.8,264.1L59.8,263.4L62.9,262.7L65.9,262.2L69.0,261.7L72.0,261.2L75.0,260.8L78.1,260.5L81.1,260.1L84.2,259.8L87.2,259.6L90.2,259.3L93.3,259.1L96.3,258.9L99.4,258.8L102.4,258.7L105.5,258.7L108.5,258.7L111.5,258.7L114.6,258.8L117.6,258.8L120.7,258.9L123.7,259.0L126.8,259.0L129.8,259.1L132.8,259.1L135.9,259.1L138.9,259.1L142.0,258.9L145.0,258.8L148.0,258.5L151.1,258.1L154.1,257.6L157.2,257.0L160.2,256.2L163.2,255.3L166.3,254.2L169.3,252.9L172.4,251.5L175.4,250.0L178.5,248.5L181.5,246.8L184.5,245.1L187.6,243.4L190.6,241.6L193.7,239.9L196.7,238.1L199.8,236.4L202.8,234.7L205.8,233.1L208.9,231.6L211.9,230.1L215.0,228.8L218.0,227.5L218.0,227.6L221.0,227.0L224.0,226.5L227.1,226.2L230.1,226.2L233.1,226.6L236.1,227.5L239.2,228.7L242.2,230.1L245.2,231.7L248.2,233.4L251.3,235.1L254.3,237.0L257.3,239.1L260.3,241.3L263.3,243.5L266.4,245.8L269.4,248.1L272.4,250.4L275.4,252.6L278.5,254.8L281.5,257.1L284.5,259.4L287.5,261.6L290.6,263.7L293.6,265.7L296.6,267.4L299.6,268.9L302.7,270.4L305.7,271.8L308.7,273.2L311.7,274.6L314.7,275.9L317.8,277.1L320.8,278.3L323.8,279.4L326.8,280.5L329.9,281.5L332.9,282.7L335.9,283.8L338.9,285.0L342.0,286.2L345.0,287.2L348.0,288.4L348.0,288.4L345.0,287.2L342.0,286.2L339.0,285.4L336.0,284.7L333.0,284.2L330.0,283.8L327.0,283.6L324.0,283.6L321.0,283.6L318.0,283.8L314.9,284.1L311.9,284.6L308.9,285.1L305.9,285.8L302.9,286.7L299.9,287.7L296.9,288.8L293.9,290.0L290.9,291.2L287.9,292.5L284.9,293.8L281.9,295.2L278.9,296.7L275.9,298.3L272.9,300.0L269.9,301.7L266.9,303.5L263.9,305.3L260.9,307.1L257.9,308.9L254.9,310.7L251.8,312.5L248.8,314.3L245.8,316.0L242.8,317.5L239.8,318.7L236.8,319.7L233.8,320.3L230.8,320.6L227.8,320.5L224.8,320.1L221.8,319.3L218.8,318.3L215.8,317.2L212.8,315.9L209.8,314.5L206.8,313.0L203.8,311.4L200.8,309.8L197.8,308.1L194.8,306.4L191.8,304.6L188.7,302.9L185.7,301.2L182.7,299.5L179.7,297.8L176.7,296.2L173.7,294.7L170.7,293.3L167.7,292.0L164.7,290.9L161.7,289.8L158.7,289.0L155.7,288.3L152.7,287.8L149.7,287.3L146.7,287.0L143.7,286.8L140.7,286.6L137.7,286.5L134.7,286.5L131.7,286.5L128.6,286.5L125.6,286.6L122.6,286.7L119.6,286.7L116.6,286.8L113.6,286.9L110.6,286.9L107.6,286.9L104.6,286.9L101.6,286.8L98.6,286.8L95.6,286.6L92.6,286.4L89.6,286.2L86.6,286.0L83.6,285.7L80.6,285.4L77.6,285.1L74.6,284.7L71.6,284.3L68.6,283.9L65.5,283.4L62.5,282.8L59.5,282.2L56.5,281.5L53.5,280.7L50.5,279.8L47.5,279.0L44.5,278.2L41.5,277.3L38.5,276.5L35.5,275.6Z" fill="#00b9e8"/>
<path d="M35.5,270.0L38.6,269.1L41.6,268.3L44.7,267.4L47.7,266.5L50.8,265.7L53.8,264.8L56.9,264.0L59.9,263.3L63.0,262.7L66.1,262.1L69.1,261.6L72.2,261.2L75.2,260.8L78.3,260.4L81.3,260.1L84.4,259.8L87.4,259.5L90.5,259.3L93.6,259.1L96.6,258.9L99.7,258.8L102.7,258.7L105.8,258.7L108.8,258.7L111.9,258.7L114.9,258.8L118.0,258.8L118.0,258.9L121.0,259.4L124.1,259.9L127.2,260.4L130.2,261.0L133.2,261.7L136.3,262.5L139.3,263.4L142.4,264.3L145.4,265.4L148.5,266.5L151.6,267.7L154.6,269.1L157.7,270.6L160.7,272.2L163.8,274.0L166.8,276.0L169.8,278.1L172.9,280.4L175.9,282.7L179.0,285.1L182.1,287.6L185.1,289.9L188.1,292.3L191.2,294.6L194.2,296.8L197.3,299.0L200.3,301.2L203.4,303.4L206.4,305.6L209.5,307.6L212.6,309.6L215.6,311.5L218.6,313.2L221.7,314.8L224.8,316.1L227.8,317.2L230.8,317.9L233.9,318.3L236.9,318.5L240.0,318.6L240.0,318.6L237.0,319.6L234.0,320.3L231.0,320.6L228.0,320.5L225.0,320.1L222.0,319.4L218.9,318.4L215.9,317.2L212.9,315.9L209.9,314.5L206.9,313.1L203.9,311.5L200.9,309.9L197.9,308.2L194.9,306.5L191.9,304.7L188.9,303.0L185.9,301.3L182.9,299.6L179.9,297.9L176.8,296.3L173.8,294.8L170.8,293.4L167.8,292.1L164.8,290.9L161.8,289.9L158.8,289.0L155.8,288.3L152.8,287.8L149.8,287.3L146.8,287.0L143.8,286.8L140.8,286.6L137.8,286.5L134.7,286.5L131.7,286.5L128.7,286.5L125.7,286.6L122.7,286.7L119.7,286.7L116.7,286.8L113.7,286.9L110.7,286.9L107.7,286.9L104.7,286.9L101.7,286.8L98.7,286.8L95.6,286.6L92.6,286.4L89.6,286.2L86.6,286.0L83.6,285.7L80.6,285.4L77.6,285.1L74.6,284.7L71.6,284.3L68.6,283.9L65.6,283.4L62.6,282.8L59.6,282.2L56.6,281.5L53.5,280.7L50.5,279.9L47.5,279.0L44.5,278.2L41.5,277.3L38.5,276.5L35.5,275.6Z" fill="#00c3ea"/>
<path d="M35.5,270.0L38.5,269.1L41.6,268.3L44.6,267.4L47.6,266.6L50.7,265.7L53.7,264.9L56.7,264.1L59.8,263.4L62.8,262.7L65.8,262.2L68.8,261.7L71.9,261.2L74.9,260.8L77.9,260.5L81.0,260.2L84.0,259.9L84.0,259.9L87.0,259.8L90.1,259.7L93.1,259.7L96.2,259.7L99.2,259.9L102.3,260.2L105.3,260.7L108.3,261.3L111.4,262.1L114.4,262.9L117.5,263.7L120.5,264.6L123.6,265.4L126.6,266.3L129.7,267.2L132.7,268.2L135.7,269.3L138.8,270.6L141.8,272.0L144.9,273.5L147.9,275.1L151.0,276.9L154.0,278.9L157.0,280.9L160.1,282.9L163.1,285.0L166.2,287.1L169.2,289.1L172.3,291.1L175.3,293.1L178.3,295.1L181.4,297.0L184.4,298.9L187.5,300.8L190.5,302.7L193.6,304.5L196.6,306.3L199.7,308.0L202.7,309.7L205.7,311.3L208.8,312.9L211.8,314.3L214.9,315.7L217.9,317.1L221.0,318.3L224.0,319.6L224.0,319.9L221.0,319.1L217.9,318.0L214.9,316.8L211.8,315.5L208.8,314.0L205.8,312.5L202.7,310.8L199.7,309.2L196.6,307.5L193.6,305.7L190.6,303.9L187.5,302.2L184.5,300.5L181.4,298.8L178.4,297.1L175.4,295.5L172.3,294.0L169.3,292.7L166.2,291.4L163.2,290.3L160.2,289.4L157.1,288.6L154.1,288.0L151.0,287.5L148.0,287.1L145.0,286.8L141.9,286.7L138.9,286.5L135.8,286.5L132.8,286.5L129.8,286.5L126.7,286.6L123.7,286.6L120.6,286.7L117.6,286.8L114.5,286.8L111.5,286.9L108.5,286.9L105.4,286.9L102.4,286.9L99.3,286.8L96.3,286.7L93.3,286.5L90.2,286.3L87.2,286.0L84.1,285.8L81.1,285.5L78.1,285.1L75.0,284.8L72.0,284.4L68.9,283.9L65.9,283.4L62.9,282.9L59.8,282.2L56.8,281.5L53.7,280.7L50.7,279.9L47.7,279.0L44.6,278.2L41.6,277.3L38.5,276.5L35.5,275.6Z" fill="#00ceee"/>
<path d="M35.5,271.6L38.6,272.3L41.7,273.1L44.8,273.9L47.8,274.7L50.9,275.7L54.0,276.7L57.1,277.8L60.2,278.9L63.2,280.0L66.3,280.9L69.4,281.7L72.5,282.5L75.6,283.1L78.7,283.7L81.8,284.4L84.8,285.1L87.9,285.8L91.0,286.3L91.0,286.3L87.9,286.1L84.8,285.8L81.8,285.5L78.7,285.2L75.6,284.8L72.5,284.4L69.4,284.0L66.3,283.5L63.2,282.9L60.2,282.3L57.1,281.6L54.0,280.8L50.9,280.0L47.8,279.1L44.8,278.2L41.7,277.3L38.6,276.5L35.5,275.6Z" fill="#19d8f0"/>
<path d="M692.0,285.5L695.0,285.0L697.9,284.8L700.9,284.7L703.8,284.8L706.8,284.9L709.7,285.1L712.7,285.3L715.6,285.7L718.6,286.1L721.5,286.6L724.5,287.1L727.5,287.7L730.4,288.4L733.4,289.1L736.3,289.9L739.3,290.7L742.2,291.5L745.2,292.4L748.1,293.4L751.1,294.4L754.0,295.4L757.0,296.5L760.0,297.6L762.9,298.8L765.9,300.1L768.8,301.3L771.8,302.5L774.7,303.5L777.7,304.5L780.6,305.4L783.6,306.2L786.5,307.1L789.5,307.9L792.5,308.7L795.4,309.5L798.4,310.1L801.3,310.5L804.3,310.9L807.2,311.1L810.2,311.3L813.1,311.4L816.1,311.4L819.0,311.3L822.0,311.2L822.0,311.4L819.0,311.8L816.1,312.1L813.1,312.3L810.2,312.3L807.2,312.3L804.3,312.1L801.3,311.8L798.4,311.4L795.4,310.9L792.5,310.3L789.5,309.5L786.5,308.7L783.6,307.9L780.6,307.1L777.7,306.2L774.7,305.3L771.8,304.3L768.8,303.2L765.9,302.0L762.9,300.7L760.0,299.5L757.0,298.4L754.0,297.3L751.1,296.3L748.1,295.3L745.2,294.3L742.2,293.4L739.3,292.5L736.3,291.7L733.4,290.9L730.4,290.1L727.5,289.4L724.5,288.7L721.5,288.1L718.6,287.6L715.6,287.1L712.7,286.6L709.7,286.3L706.8,286.0L703.8,285.8L700.9,285.6L697.9,285.6L695.0,285.6L692.0,285.7Z" fill="#2a86e2"/>
<path d="M706.0,259.9L709.0,259.7L712.1,259.7L715.1,259.6L718.2,259.6L721.2,259.6L724.2,259.6L727.3,259.7L730.3,259.9L733.4,260.4L736.4,261.0L739.5,261.8L742.5,262.8L745.5,264.0L748.6,265.3L751.6,266.6L754.7,268.1L757.7,269.8L760.8,271.6L763.8,273.7L766.8,275.8L769.9,278.1L772.9,280.2L776.0,282.4L779.0,284.5L782.0,286.6L785.1,288.7L788.1,290.9L791.2,293.1L794.2,295.2L797.2,297.1L800.3,298.7L803.3,300.2L806.4,301.5L809.4,302.7L812.5,303.8L815.5,304.7L818.5,305.4L821.6,305.9L824.6,306.2L827.7,306.3L830.7,306.3L833.8,306.2L836.8,305.9L839.8,305.4L842.9,304.3L845.9,302.7L849.0,301.0L852.0,299.0" fill="none" stroke="#fff" stroke-opacity=".5" stroke-width=".8"/>
<path d="M632.0,249.3L635.0,250.2L638.1,251.1L641.1,252.0L644.2,253.0L647.2,254.0L650.2,254.9L653.3,255.9L656.3,256.9L659.3,257.9L662.4,258.9L665.4,260.0L668.5,261.1L671.5,262.3L674.5,263.4L677.6,264.6L680.6,265.7L683.7,266.9L686.7,268.0L689.7,269.1L692.8,270.2L695.8,271.3L698.8,272.4L701.9,273.4L704.9,274.4L708.0,275.5L711.0,276.5L714.0,277.7L717.1,278.9L720.1,280.1L723.2,281.3L726.2,282.5L729.2,283.6L732.3,284.7L735.3,285.9L738.3,287.0L741.4,288.1L744.4,289.3L747.5,290.4L750.5,291.6L753.5,292.7L756.6,293.8L759.6,295.0L762.7,296.2L765.7,297.4L768.7,298.7L771.8,300.0L774.8,301.4L777.8,302.9L780.9,304.4L783.9,306.1L787.0,307.7L790.0,309.4" fill="none" stroke="#fff" stroke-opacity=".5" stroke-width=".8"/>
<path d="M596.0,242.6L599.0,243.5L602.0,244.4L605.1,245.3L608.1,246.2L611.1,247.0L614.1,247.8L617.2,248.5L620.2,249.3L623.2,250.0L626.2,250.8L629.2,251.7L632.3,252.6L635.3,253.6L638.3,254.7L641.3,255.8L644.3,257.0L647.4,258.3L650.4,259.7L653.4,261.3L656.4,263.0L659.5,264.8L662.5,266.5L665.5,268.0L668.5,269.4L671.5,270.6L674.6,271.8L677.6,272.9L680.6,274.1L683.6,275.2L686.7,276.4L689.7,277.5L692.7,278.6L695.7,279.6L698.7,280.6L701.8,281.5L704.8,282.4L707.8,283.3L710.8,284.0L713.8,284.7L716.9,285.4L719.9,286.0L722.9,286.8L725.9,287.7L729.0,288.7L732.0,289.8L735.0,291.0" fill="none" stroke="#fff" stroke-opacity=".5" stroke-width=".8"/>
<path d="M494.0,181.8L497.0,184.0L500.0,186.2L503.1,188.4L506.1,190.6L509.1,192.8L512.1,195.2L515.1,197.6L518.1,200.2L521.2,202.9L524.2,205.8L527.2,208.7L530.2,211.7L533.2,214.6L536.2,217.4L539.3,220.1L542.3,222.7L545.3,225.4L548.3,228.1L551.3,231.0L554.3,234.0L557.4,237.3L560.4,240.6L563.4,244.0L566.4,247.3L569.4,250.5L572.4,253.6L575.5,256.5L578.5,259.3L581.5,262.0L584.5,264.6L587.5,267.1L590.5,269.7L593.6,272.2L596.6,274.5L599.6,276.6L602.6,278.6L605.6,280.3L608.6,282.0L611.7,283.5L614.7,285.0L617.7,286.3L620.7,287.4L623.7,288.3L626.7,289.0L629.8,289.5L632.8,289.9L635.8,290.2L638.8,290.3L641.8,290.4L644.8,290.4L647.9,290.2L650.9,290.0L653.9,289.5L656.9,289.0L659.9,288.5L662.9,288.0L666.0,287.7L669.0,287.5L672.0,287.4" fill="none" stroke="#fff" stroke-opacity=".5" stroke-width=".8"/>
<path d="M462.0,174.7L465.0,175.3L468.0,176.0L471.0,176.8L474.0,177.8L477.0,178.8L480.0,180.0L483.0,181.2L486.0,182.6L489.0,184.3L492.0,186.5L495.0,189.2L498.0,192.4L501.0,195.9L504.0,199.8L507.0,204.0L510.0,208.6L513.0,213.6L516.0,219.1L519.0,224.8L522.0,230.7L525.0,236.4L528.0,241.8L531.0,247.0L534.0,252.0L537.0,256.7L540.0,261.2L543.0,265.4L546.0,269.2L549.0,272.6L552.0,275.8L555.0,278.7L558.0,281.6L561.0,284.4L564.0,287.0L567.0,289.2L570.0,291.0L573.0,292.6L576.0,294.0L579.0,295.4L582.0,296.8L585.0,298.1L588.0,299.3L591.0,300.4L594.0,301.3L597.0,301.9L600.0,302.0L603.0,301.6L606.0,301.0" fill="none" stroke="#fff" stroke-opacity=".5" stroke-width=".8"/>
<path d="M372.0,241.3L375.0,238.6L378.0,235.9L381.1,233.3L384.1,230.8L387.1,228.3L390.1,226.1L393.1,224.1L396.1,222.5L399.2,221.2L402.2,220.2L405.2,219.5L408.2,218.9L411.2,218.6L414.3,218.5L417.3,218.7L420.3,219.2L423.3,220.2L426.3,221.8L429.4,224.3L432.4,227.9L435.4,232.4L438.4,237.6L441.4,243.2L444.4,249.1L447.5,255.3L450.5,261.7L453.5,268.2L456.5,274.7L459.5,281.2L462.6,287.5L465.6,293.6L468.6,299.5L471.6,305.1L474.6,310.3L477.6,315.2L480.7,319.8L483.7,324.0L486.7,327.7L489.7,331.0L492.7,333.7L495.8,336.0L498.8,337.8L501.8,339.2L504.8,340.3L507.8,341.0L510.9,341.4L513.9,341.6L516.9,341.5L519.9,341.1L522.9,340.3L525.9,339.0L529.0,337.3L532.0,335.2L535.0,333.0" fill="none" stroke="#fff" stroke-opacity=".5" stroke-width=".8"/>
<path d="M308.0,260.4L311.0,260.9L314.0,261.4L317.0,261.8L320.0,262.3L323.0,262.8L326.0,263.3L329.0,263.9L332.0,264.8L335.0,265.7L338.0,266.9L341.0,268.3L344.0,269.8L347.0,271.5L350.0,273.4L353.0,275.5L356.0,277.8L359.0,280.2L362.0,282.7L365.0,285.3L368.0,287.9L371.0,290.6L374.0,293.3L377.0,296.0L380.0,298.8L383.0,301.6L386.0,304.6L389.0,307.6L392.0,310.7L395.0,313.9L398.0,317.2L401.0,320.5L404.0,323.9L407.0,327.2L410.0,330.6L413.0,333.8L416.0,337.0L419.0,340.0L422.0,342.8L425.0,345.6L428.0,348.3L431.0,350.9L434.0,353.4L437.0,355.9L440.0,358.2L443.0,360.3L446.0,362.2L449.0,363.9L452.0,365.5L455.0,367.0" fill="none" stroke="#fff" stroke-opacity=".5" stroke-width=".8"/>
<path d="M266.0,241.8L269.0,243.4L272.0,245.2L275.1,246.9L278.1,248.5L281.1,250.0L284.1,251.5L287.2,252.8L290.2,254.1L293.2,255.3L296.2,257.0L299.2,258.7L302.3,260.3L305.3,262.0L308.3,263.6L311.3,265.2L314.4,266.7L317.4,268.3L320.4,269.8L323.4,271.3L326.4,272.8L329.5,274.3L332.5,275.8L335.5,277.3L338.5,278.9L341.6,280.4L344.6,282.1L347.6,283.8L350.6,285.5L353.6,287.4L356.7,289.4L359.7,291.5L362.7,293.7L365.7,296.2L368.8,298.7L371.8,301.5L374.8,304.5L377.8,307.5L380.8,310.7L383.9,313.9L386.9,317.1L389.9,320.5L392.9,323.9L396.0,327.4L399.0,330.9L402.0,333.9" fill="none" stroke="#fff" stroke-opacity=".5" stroke-width=".8"/>
<path d="M218.0,227.6L221.0,227.0L224.0,226.5L227.1,226.2L230.1,226.2L233.1,226.6L236.1,227.5L239.2,228.7L242.2,230.1L245.2,231.7L248.2,233.4L251.3,235.1L254.3,237.0L257.3,239.1L260.3,241.3L263.3,243.5L266.4,245.8L269.4,248.1L272.4,250.4L275.4,252.6L278.5,254.8L281.5,257.1L284.5,259.4L287.5,261.6L290.6,263.7L293.6,265.7L296.6,267.4L299.6,268.9L302.7,270.4L305.7,271.8L308.7,273.2L311.7,274.6L314.7,275.9L317.8,277.1L320.8,278.3L323.8,279.4L326.8,280.5L329.9,281.5L332.9,282.7L335.9,283.8L338.9,285.0L342.0,286.2L345.0,287.2L348.0,288.4" fill="none" stroke="#fff" stroke-opacity=".5" stroke-width=".8"/>
<path d="M118.0,258.9L121.0,259.4L124.1,259.9L127.2,260.4L130.2,261.0L133.2,261.7L136.3,262.5L139.3,263.4L142.4,264.3L145.4,265.4L148.5,266.5L151.6,267.7L154.6,269.1L157.7,270.6L160.7,272.2L163.8,274.0L166.8,276.0L169.8,278.1L172.9,280.4L175.9,282.7L179.0,285.1L182.1,287.6L185.1,289.9L188.1,292.3L191.2,294.6L194.2,296.8L197.3,299.0L200.3,301.2L203.4,303.4L206.4,305.6L209.5,307.6L212.6,309.6L215.6,311.5L218.6,313.2L221.7,314.8L224.8,316.1L227.8,317.2L230.8,317.9L233.9,318.3L236.9,318.5L240.0,318.6" fill="none" stroke="#fff" stroke-opacity=".5" stroke-width=".8"/>
<path d="M84.0,259.9L87.0,259.8L90.1,259.7L93.1,259.7L96.2,259.7L99.2,259.9L102.3,260.2L105.3,260.7L108.3,261.3L111.4,262.1L114.4,262.9L117.5,263.7L120.5,264.6L123.6,265.4L126.6,266.3L129.7,267.2L132.7,268.2L135.7,269.3L138.8,270.6L141.8,272.0L144.9,273.5L147.9,275.1L151.0,276.9L154.0,278.9L157.0,280.9L160.1,282.9L163.1,285.0L166.2,287.1L169.2,289.1L172.3,291.1L175.3,293.1L178.3,295.1L181.4,297.0L184.4,298.9L187.5,300.8L190.5,302.7L193.6,304.5L196.6,306.3L199.7,308.0L202.7,309.7L205.7,311.3L208.8,312.9L211.8,314.3L214.9,315.7L217.9,317.1L221.0,318.3L224.0,319.6" fill="none" stroke="#fff" stroke-opacity=".5" stroke-width=".8"/>
<path d="M35.5,271.6L38.6,272.3L41.7,273.1L44.8,273.9L47.8,274.7L50.9,275.7L54.0,276.7L57.1,277.8L60.2,278.9L63.2,280.0L66.3,280.9L69.4,281.7L72.5,282.5L75.6,283.1L78.7,283.7L81.8,284.4L84.8,285.1L87.9,285.8L91.0,286.3" fill="none" stroke="#fff" stroke-opacity=".5" stroke-width=".8"/></svg>
<div style="position:absolute;top:384px;font-size:9.7px;line-height:11.155px;color:#8a8a8a;white-space:nowrap;letter-spacing:0.368px;left:114.37px;-webkit-text-stroke:0;">November</div>
<div style="position:absolute;top:384px;font-size:9.7px;line-height:11.155px;color:#8a8a8a;white-space:nowrap;letter-spacing:0.368px;left:394.37px;-webkit-text-stroke:0;">December</div>
<div style="position:absolute;top:384px;font-size:9.7px;line-height:11.155px;color:#8a8a8a;white-space:nowrap;letter-spacing:0.899px;left:695.37px;-webkit-text-stroke:0;">2020</div>
<div style="position:absolute;left:21px;top:418.8px;width:90px;height:12.6px;box-sizing:border-box;border:.7px solid #c2c2c2;border-radius:3px;background:#fff;box-shadow:0 .5px .6px rgba(0,0,0,.1)"></div><div style="position:absolute;left:100px;top:418.8px;width:11px;height:12.6px;border-radius:0 3px 3px 0;background:linear-gradient(#4ba1f8,#1670f2)"></div><svg style="position:absolute;left:101.5px;top:420.1px" width="8" height="10" viewBox="0 0 8 10"><path d="M2.3,4 L4,2.2 L5.7,4 M2.3,6 L4,7.8 L5.7,6" stroke="#fff" stroke-width="1" fill="none" stroke-linecap="round" stroke-linejoin="round"/></svg><div style="position:absolute;top:422px;font-size:7.8px;line-height:8.970px;color:#111;white-space:nowrap;letter-spacing:0.287px;left:26.49px;">All sources</div>
<div style="position:absolute;left:124px;top:415.5px;width:32px;height:17.5px;background:#eee"></div>
<div style="position:absolute;top:418.8px;font-size:10px;line-height:11.500px;color:#000;white-space:nowrap;letter-spacing:0.196px;left:126.85px;">Sales</div>
<div style="position:absolute;top:418.8px;font-size:10px;line-height:11.500px;color:#1030d0;white-space:nowrap;letter-spacing:0.291px;left:168.35px;">Profit<span style="position:absolute;left:0.65px;right:0.65px;top:9.7px;height:0;border-bottom:1px dotted rgba(20,50,200,.6)"></span></div>
<div style="position:absolute;top:418.8px;font-size:10px;line-height:11.500px;color:#1030d0;white-space:nowrap;letter-spacing:0.066px;left:208.35px;">Number of orders<span style="position:absolute;left:0.65px;right:0.65px;top:9.7px;height:0;border-bottom:1px dotted rgba(20,50,200,.6)"></span></div>
<div style="position:absolute;top:418.8px;font-size:10px;line-height:11.500px;color:#1030d0;white-space:nowrap;letter-spacing:-0.155px;left:303.35px;">LTV<span style="position:absolute;left:0.65px;right:0.65px;top:9.7px;height:0;border-bottom:1px dotted rgba(20,50,200,.6)"></span></div>
<div style="position:absolute;top:418.8px;font-size:10px;line-height:11.500px;color:#1030d0;white-space:nowrap;letter-spacing:-0.241px;left:336.35px;">ROI<span style="position:absolute;left:0.65px;right:0.65px;top:9.7px;height:0;border-bottom:1px dotted rgba(20,50,200,.6)"></span></div>
<div style="position:absolute;left:816px;top:419.4px;width:75.8px;height:12px;box-sizing:border-box;border:.7px solid #c2c2c2;border-radius:3px;background:#fff;box-shadow:0 .5px .6px rgba(0,0,0,.1)"></div><div style="position:absolute;left:881.1999999999999px;top:419.4px;width:10.6px;height:12px;border-radius:0 3px 3px 0;background:linear-gradient(#4ba1f8,#1670f2)"></div><svg style="position:absolute;left:882.5px;top:420.4px" width="8" height="10" viewBox="0 0 8 10"><path d="M2.3,4 L4,2.2 L5.7,4 M2.3,6 L4,7.8 L5.7,6" stroke="#fff" stroke-width="1" fill="none" stroke-linecap="round" stroke-linejoin="round"/></svg><div style="position:absolute;top:422px;font-size:7.8px;line-height:8.970px;color:#111;white-space:nowrap;letter-spacing:0.242px;left:821.19px;">Stream graph</div>
<div style="position:absolute;top:447px;font-size:10.4px;line-height:11.960px;color:#111;white-space:nowrap;letter-spacing:-0.289px;word-spacing:0.174px;font-weight:bold;-webkit-text-stroke:.06px;left:8.36px;width:300px;text-align:center;">Week 1</div>
<div style="position:absolute;top:447px;font-size:10.4px;line-height:11.960px;color:#111;white-space:nowrap;letter-spacing:-0.289px;word-spacing:0.174px;font-weight:bold;-webkit-text-stroke:.06px;left:63.36px;width:300px;text-align:center;">Week 2</div>
<div style="position:absolute;top:447px;font-size:10.4px;line-height:11.960px;color:#111;white-space:nowrap;letter-spacing:-0.289px;word-spacing:0.174px;font-weight:bold;-webkit-text-stroke:.06px;left:111.86px;width:300px;text-align:center;">Week 3</div>
<div style="position:absolute;top:447px;font-size:10.4px;line-height:11.960px;color:#111;white-space:nowrap;letter-spacing:-0.289px;word-spacing:0.174px;font-weight:bold;-webkit-text-stroke:.06px;left:160.86px;width:300px;text-align:center;">Week 4</div>
<div style="position:absolute;top:447px;font-size:10.4px;line-height:11.960px;color:#111;white-space:nowrap;letter-spacing:-0.289px;word-spacing:0.174px;font-weight:bold;-webkit-text-stroke:.06px;left:209.36px;width:300px;text-align:center;">Week 5</div>
<div style="position:absolute;top:447px;font-size:10.4px;line-height:11.960px;color:#111;white-space:nowrap;letter-spacing:-0.289px;word-spacing:0.174px;font-weight:bold;-webkit-text-stroke:.06px;left:258.11px;width:300px;text-align:center;">Week 6</div>
<div style="position:absolute;top:447px;font-size:10.4px;line-height:11.960px;color:#111;white-space:nowrap;letter-spacing:-0.289px;word-spacing:0.174px;font-weight:bold;-webkit-text-stroke:.06px;left:306.61px;width:300px;text-align:center;">Week 7</div>
<div style="position:absolute;top:447px;font-size:10.4px;line-height:11.960px;color:#111;white-space:nowrap;letter-spacing:-0.289px;word-spacing:0.174px;font-weight:bold;-webkit-text-stroke:.06px;left:355.36px;width:300px;text-align:center;">Week 8</div>
<div style="position:absolute;top:447px;font-size:10.4px;line-height:11.960px;color:#111;white-space:nowrap;letter-spacing:-0.289px;word-spacing:0.174px;font-weight:bold;-webkit-text-stroke:.06px;left:403.46px;width:300px;text-align:center;">Week 9</div>
<div style="position:absolute;top:447px;font-size:10.4px;line-height:11.960px;color:#111;white-space:nowrap;letter-spacing:-0.325px;word-spacing:0.195px;font-weight:bold;-webkit-text-stroke:.06px;left:453.84px;width:300px;text-align:center;">Week 10</div>
<div style="position:absolute;top:447px;font-size:10.4px;line-height:11.960px;color:#111;white-space:nowrap;letter-spacing:-0.218px;word-spacing:0.131px;font-weight:bold;-webkit-text-stroke:.06px;left:505.64px;width:300px;text-align:center;">Week 11</div>
<div style="position:absolute;top:447px;font-size:10.4px;line-height:11.960px;color:#111;white-space:nowrap;letter-spacing:-0.325px;word-spacing:0.195px;font-weight:bold;-webkit-text-stroke:.06px;left:559.34px;width:300px;text-align:center;">Week 12</div>
<div style="position:absolute;top:447px;font-size:10.4px;line-height:11.960px;color:#111;white-space:nowrap;letter-spacing:-0.325px;word-spacing:0.195px;font-weight:bold;-webkit-text-stroke:.06px;left:611.84px;width:300px;text-align:center;">Week 13</div>
<div style="position:absolute;top:447px;font-size:10.4px;line-height:11.960px;color:#111;white-space:nowrap;letter-spacing:-0.325px;word-spacing:0.195px;font-weight:bold;-webkit-text-stroke:.06px;left:664.34px;width:300px;text-align:center;">Week 14</div>
<div style="position:absolute;top:447px;font-size:10.4px;line-height:11.960px;color:#111;white-space:nowrap;letter-spacing:-0.053px;font-weight:bold;-webkit-text-stroke:.06px;left:721.27px;width:300px;text-align:center;">Total</div>
<div style="position:absolute;left:18px;top:469.5px;width:885.4px;height:190px;box-sizing:border-box;border:1px solid #9c9c9c;border-bottom:none"></div><div style="position:absolute;left:128px;top:470px;width:1px;height:190px;background:#9c9c9c"></div><div style="position:absolute;left:841px;top:470px;width:1px;height:190px;background:#9c9c9c"></div>
<div style="position:absolute;left:129px;top:504.6px;width:60.5px;height:1px;background:#19d8f0"></div>
<div style="position:absolute;top:479px;font-size:10.4px;line-height:11.960px;color:#a2a2a2;white-space:nowrap;letter-spacing:-0.270px;word-spacing:0.162px;font-weight:bold;-webkit-text-stroke:.06px;left:-77.33px;width:300px;text-align:center;">October 21, 2019 —</div>
<div style="position:absolute;top:488px;font-size:10.4px;line-height:11.960px;color:#a2a2a2;white-space:nowrap;letter-spacing:-0.204px;word-spacing:0.123px;font-weight:bold;-webkit-text-stroke:.06px;left:-77.30px;width:300px;text-align:center;">October 27, 2019</div>
<div style="position:absolute;top:482.8px;font-size:10px;line-height:11.500px;color:#111;white-space:nowrap;left:8.80px;width:300px;text-align:center;">$587.32</div>
<div style="position:absolute;top:482.8px;font-size:10px;line-height:11.500px;color:#111;white-space:nowrap;letter-spacing:0.275px;left:63.64px;width:300px;text-align:center;">$0</div>
<div style="position:absolute;top:482.8px;font-size:10px;line-height:11.500px;color:#111;white-space:nowrap;letter-spacing:0.275px;left:112.14px;width:300px;text-align:center;">$0</div>
<div style="position:absolute;top:482.8px;font-size:10px;line-height:11.500px;color:#111;white-space:nowrap;letter-spacing:0.275px;left:161.14px;width:300px;text-align:center;">$0</div>
<div style="position:absolute;top:482.8px;font-size:10px;line-height:11.500px;color:#111;white-space:nowrap;letter-spacing:0.275px;left:209.64px;width:300px;text-align:center;">$0</div>
<div style="position:absolute;top:482.8px;font-size:10px;line-height:11.500px;color:#111;white-space:nowrap;letter-spacing:0.275px;left:258.39px;width:300px;text-align:center;">$0</div>
<div style="position:absolute;top:482.8px;font-size:10px;line-height:11.500px;color:#111;white-space:nowrap;letter-spacing:0.275px;left:306.89px;width:300px;text-align:center;">$0</div>
<div style="position:absolute;top:482.8px;font-size:10px;line-height:11.500px;color:#111;white-space:nowrap;letter-spacing:0.275px;left:355.64px;width:300px;text-align:center;">$0</div>
<div style="position:absolute;top:482.8px;font-size:10px;line-height:11.500px;color:#111;white-space:nowrap;letter-spacing:0.275px;left:403.74px;width:300px;text-align:center;">$0</div>
<div style="position:absolute;top:482.8px;font-size:10px;line-height:11.500px;color:#111;white-space:nowrap;letter-spacing:0.275px;left:454.14px;width:300px;text-align:center;">$0</div>
<div style="position:absolute;top:482.8px;font-size:10px;line-height:11.500px;color:#111;white-space:nowrap;letter-spacing:0.275px;left:505.89px;width:300px;text-align:center;">$0</div>
<div style="position:absolute;top:482.8px;font-size:10px;line-height:11.500px;color:#111;white-space:nowrap;letter-spacing:0.275px;left:559.64px;width:300px;text-align:center;">$0</div>
<div style="position:absolute;top:482.8px;font-size:10px;line-height:11.500px;color:#111;white-space:nowrap;letter-spacing:0.275px;left:612.14px;width:300px;text-align:center;">$0</div>
<div style="position:absolute;top:482.8px;font-size:10px;line-height:11.500px;color:#111;white-space:nowrap;letter-spacing:0.275px;left:664.64px;width:300px;text-align:center;">$0</div>
<div style="position:absolute;top:483px;font-size:10.4px;line-height:11.960px;color:#111;white-space:nowrap;letter-spacing:0.015px;font-weight:bold;-webkit-text-stroke:.06px;left:721.81px;width:300px;text-align:center;">$587.32</div>
<div style="position:absolute;left:18px;top:505.6px;width:885px;height:1px;background:#9c9c9c"></div>
<div style="position:absolute;left:129px;top:535.7px;width:60.5px;height:6px;background:#00ceee"></div>
<div style="position:absolute;top:515px;font-size:10.4px;line-height:11.960px;color:#a2a2a2;white-space:nowrap;letter-spacing:-0.270px;word-spacing:0.162px;font-weight:bold;-webkit-text-stroke:.06px;left:-77.33px;width:300px;text-align:center;">October 28, 2019 —</div>
<div style="position:absolute;top:524px;font-size:10.4px;line-height:11.960px;color:#a2a2a2;white-space:nowrap;letter-spacing:-0.183px;word-spacing:0.110px;font-weight:bold;-webkit-text-stroke:.06px;left:-77.29px;width:300px;text-align:center;">November 3, 2019</div>
<div style="position:absolute;top:518.8px;font-size:10px;line-height:11.500px;color:#111;white-space:nowrap;left:8.80px;width:300px;text-align:center;">$3,340.66</div>
<div style="position:absolute;top:518.8px;font-size:10px;line-height:11.500px;color:#111;white-space:nowrap;letter-spacing:0.275px;left:63.64px;width:300px;text-align:center;">$0</div>
<div style="position:absolute;top:518.8px;font-size:10px;line-height:11.500px;color:#111;white-space:nowrap;letter-spacing:0.275px;left:112.14px;width:300px;text-align:center;">$0</div>
<div style="position:absolute;top:518.8px;font-size:10px;line-height:11.500px;color:#111;white-space:nowrap;letter-spacing:0.275px;left:161.14px;width:300px;text-align:center;">$0</div>
<div style="position:absolute;top:518.8px;font-size:10px;line-height:11.500px;color:#111;white-space:nowrap;letter-spacing:0.275px;left:209.64px;width:300px;text-align:center;">$0</div>
<div style="position:absolute;top:518.8px;font-size:10px;line-height:11.500px;color:#111;white-space:nowrap;letter-spacing:0.275px;left:258.39px;width:300px;text-align:center;">$0</div>
<div style="position:absolute;top:518.8px;font-size:10px;line-height:11.500px;color:#111;white-space:nowrap;letter-spacing:0.275px;left:306.89px;width:300px;text-align:center;">$0</div>
<div style="position:absolute;top:518.8px;font-size:10px;line-height:11.500px;color:#111;white-space:nowrap;letter-spacing:0.275px;left:355.64px;width:300px;text-align:center;">$0</div>
<div style="position:absolute;top:518.8px;font-size:10px;line-height:11.500px;color:#111;white-space:nowrap;letter-spacing:0.275px;left:403.74px;width:300px;text-align:center;">$0</div>
<div style="position:absolute;top:518.8px;font-size:10px;line-height:11.500px;color:#111;white-space:nowrap;letter-spacing:0.275px;left:454.14px;width:300px;text-align:center;">$0</div>
<div style="position:absolute;top:518.8px;font-size:10px;line-height:11.500px;color:#111;white-space:nowrap;letter-spacing:0.275px;left:505.89px;width:300px;text-align:center;">$0</div>
<div style="position:absolute;top:518.8px;font-size:10px;line-height:11.500px;color:#111;white-space:nowrap;letter-spacing:0.275px;left:559.64px;width:300px;text-align:center;">$0</div>
<div style="position:absolute;top:518.8px;font-size:10px;line-height:11.500px;color:#111;white-space:nowrap;letter-spacing:0.275px;left:612.14px;width:300px;text-align:center;">$0</div>
<div style="position:absolute;top:519px;font-size:10.4px;line-height:11.960px;color:#111;white-space:nowrap;letter-spacing:-0.160px;font-weight:bold;-webkit-text-stroke:.06px;left:721.72px;width:300px;text-align:center;">$3,340.66</div>
<div style="position:absolute;left:18px;top:541.7px;width:885px;height:1px;background:#9c9c9c"></div>
<div style="position:absolute;left:129px;top:575.8px;width:60.5px;height:2px;background:#00c3ea"></div>
<div style="position:absolute;top:551px;font-size:10.4px;line-height:11.960px;color:#a2a2a2;white-space:nowrap;letter-spacing:-0.349px;word-spacing:0.209px;font-weight:bold;-webkit-text-stroke:.06px;left:-77.37px;width:300px;text-align:center;">November 4, 2019 —</div>
<div style="position:absolute;top:560px;font-size:10.4px;line-height:11.960px;color:#a2a2a2;white-space:nowrap;letter-spacing:-0.257px;word-spacing:0.154px;font-weight:bold;-webkit-text-stroke:.06px;left:-77.33px;width:300px;text-align:center;">November 10, 2019</div>
<div style="position:absolute;top:554.8px;font-size:10px;line-height:11.500px;color:#111;white-space:nowrap;left:8.80px;width:300px;text-align:center;">$1,197.32</div>
<div style="position:absolute;top:554.8px;font-size:10px;line-height:11.500px;color:#111;white-space:nowrap;letter-spacing:0.275px;left:63.64px;width:300px;text-align:center;">$0</div>
<div style="position:absolute;top:554.8px;font-size:10px;line-height:11.500px;color:#111;white-space:nowrap;letter-spacing:0.275px;left:112.14px;width:300px;text-align:center;">$0</div>
<div style="position:absolute;top:554.8px;font-size:10px;line-height:11.500px;color:#111;white-space:nowrap;letter-spacing:0.275px;left:161.14px;width:300px;text-align:center;">$0</div>
<div style="position:absolute;top:554.8px;font-size:10px;line-height:11.500px;color:#111;white-space:nowrap;letter-spacing:0.275px;left:209.64px;width:300px;text-align:center;">$0</div>
<div style="position:absolute;top:554.8px;font-size:10px;line-height:11.500px;color:#111;white-space:nowrap;letter-spacing:0.275px;left:258.39px;width:300px;text-align:center;">$0</div>
<div style="position:absolute;top:554.8px;font-size:10px;line-height:11.500px;color:#111;white-space:nowrap;letter-spacing:0.275px;left:306.89px;width:300px;text-align:center;">$0</div>
<div style="position:absolute;top:554.8px;font-size:10px;line-height:11.500px;color:#111;white-space:nowrap;letter-spacing:0.275px;left:355.64px;width:300px;text-align:center;">$0</div>
<div style="position:absolute;top:554.8px;font-size:10px;line-height:11.500px;color:#111;white-space:nowrap;letter-spacing:0.275px;left:403.74px;width:300px;text-align:center;">$0</div>
<div style="position:absolute;top:554.8px;font-size:10px;line-height:11.500px;color:#111;white-space:nowrap;letter-spacing:0.275px;left:454.14px;width:300px;text-align:center;">$0</div>
<div style="position:absolute;top:554.8px;font-size:10px;line-height:11.500px;color:#111;white-space:nowrap;letter-spacing:0.275px;left:505.89px;width:300px;text-align:center;">$0</div>
<div style="position:absolute;top:554.8px;font-size:10px;line-height:11.500px;color:#111;white-space:nowrap;letter-spacing:0.275px;left:559.64px;width:300px;text-align:center;">$0</div>
<div style="position:absolute;top:555px;font-size:10.4px;line-height:11.960px;color:#111;white-space:nowrap;letter-spacing:-0.160px;font-weight:bold;-webkit-text-stroke:.06px;left:721.72px;width:300px;text-align:center;">$1,197.32</div>
<div style="position:absolute;left:18px;top:577.8px;width:885px;height:1px;background:#9c9c9c"></div>
<div style="position:absolute;left:129px;top:590.9px;width:60.5px;height:23px;background:#00b9e8"></div>
<div style="position:absolute;top:587px;font-size:10.4px;line-height:11.960px;color:#a2a2a2;white-space:nowrap;letter-spacing:-0.309px;word-spacing:0.185px;font-weight:bold;-webkit-text-stroke:.06px;left:-77.35px;width:300px;text-align:center;">November 11, 2019 —</div>
<div style="position:absolute;top:596px;font-size:10.4px;line-height:11.960px;color:#a2a2a2;white-space:nowrap;letter-spacing:-0.257px;word-spacing:0.154px;font-weight:bold;-webkit-text-stroke:.06px;left:-77.33px;width:300px;text-align:center;">November 17, 2019</div>
<div style="position:absolute;top:590.8px;font-size:10px;line-height:11.500px;color:#111;white-space:nowrap;letter-spacing:0.132px;left:133.95px;">$11,816.97</div>
<div style="position:absolute;top:590.8px;font-size:10px;line-height:11.500px;color:#111;white-space:nowrap;letter-spacing:0.275px;left:63.64px;width:300px;text-align:center;">$0</div>
<div style="position:absolute;top:590.8px;font-size:10px;line-height:11.500px;color:#111;white-space:nowrap;letter-spacing:0.275px;left:112.14px;width:300px;text-align:center;">$0</div>
<div style="position:absolute;top:590.8px;font-size:10px;line-height:11.500px;color:#111;white-space:nowrap;letter-spacing:0.275px;left:161.14px;width:300px;text-align:center;">$0</div>
<div style="position:absolute;top:590.8px;font-size:10px;line-height:11.500px;color:#111;white-space:nowrap;letter-spacing:0.275px;left:209.64px;width:300px;text-align:center;">$0</div>
<div style="position:absolute;top:590.8px;font-size:10px;line-height:11.500px;color:#111;white-space:nowrap;letter-spacing:0.275px;left:258.39px;width:300px;text-align:center;">$0</div>
<div style="position:absolute;top:590.8px;font-size:10px;line-height:11.500px;color:#111;white-space:nowrap;letter-spacing:0.275px;left:306.89px;width:300px;text-align:center;">$0</div>
<div style="position:absolute;top:590.8px;font-size:10px;line-height:11.500px;color:#111;white-space:nowrap;letter-spacing:0.275px;left:355.64px;width:300px;text-align:center;">$0</div>
<div style="position:absolute;top:590.8px;font-size:10px;line-height:11.500px;color:#111;white-space:nowrap;letter-spacing:0.275px;left:403.74px;width:300px;text-align:center;">$0</div>
<div style="position:absolute;top:590.8px;font-size:10px;line-height:11.500px;color:#111;white-space:nowrap;letter-spacing:0.275px;left:454.14px;width:300px;text-align:center;">$0</div>
<div style="position:absolute;top:590.8px;font-size:10px;line-height:11.500px;color:#111;white-space:nowrap;letter-spacing:0.275px;left:505.89px;width:300px;text-align:center;">$0</div>
<div style="position:absolute;top:591px;font-size:10.4px;line-height:11.960px;color:#111;white-space:nowrap;letter-spacing:-0.165px;font-weight:bold;-webkit-text-stroke:.06px;left:721.72px;width:300px;text-align:center;">$11,816.97</div>
<div style="position:absolute;left:18px;top:613.9px;width:885px;height:1px;background:#9c9c9c"></div>
<div style="position:absolute;left:129px;top:647.0px;width:60.5px;height:3px;background:#00aee6"></div>
<div style="position:absolute;top:623px;font-size:10.4px;line-height:11.960px;color:#a2a2a2;white-space:nowrap;letter-spacing:-0.345px;word-spacing:0.207px;font-weight:bold;-webkit-text-stroke:.06px;left:-77.37px;width:300px;text-align:center;">November 18, 2019 —</div>
<div style="position:absolute;top:632px;font-size:10.4px;line-height:11.960px;color:#a2a2a2;white-space:nowrap;letter-spacing:-0.257px;word-spacing:0.154px;font-weight:bold;-webkit-text-stroke:.06px;left:-77.33px;width:300px;text-align:center;">November 24, 2019</div>
<div style="position:absolute;top:626.8px;font-size:10px;line-height:11.500px;color:#111;white-space:nowrap;left:8.80px;width:300px;text-align:center;">$1,437.16</div>
<div style="position:absolute;top:626.8px;font-size:10px;line-height:11.500px;color:#111;white-space:nowrap;letter-spacing:0.275px;left:63.64px;width:300px;text-align:center;">$0</div>
<div style="position:absolute;top:626.8px;font-size:10px;line-height:11.500px;color:#111;white-space:nowrap;letter-spacing:0.275px;left:112.14px;width:300px;text-align:center;">$0</div>
<div style="position:absolute;top:626.8px;font-size:10px;line-height:11.500px;color:#111;white-space:nowrap;letter-spacing:0.275px;left:161.14px;width:300px;text-align:center;">$0</div>
<div style="position:absolute;top:626.8px;font-size:10px;line-height:11.500px;color:#111;white-space:nowrap;letter-spacing:0.275px;left:209.64px;width:300px;text-align:center;">$0</div>
<div style="position:absolute;top:626.8px;font-size:10px;line-height:11.500px;color:#111;white-space:nowrap;letter-spacing:0.275px;left:258.39px;width:300px;text-align:center;">$0</div>
<div style="position:absolute;top:626.8px;font-size:10px;line-height:11.500px;color:#111;white-space:nowrap;letter-spacing:0.275px;left:306.89px;width:300px;text-align:center;">$0</div>
<div style="position:absolute;top:626.8px;font-size:10px;line-height:11.500px;color:#111;white-space:nowrap;letter-spacing:0.275px;left:355.64px;width:300px;text-align:center;">$0</div>
<div style="position:absolute;top:626.8px;font-size:10px;line-height:11.500px;color:#111;white-space:nowrap;letter-spacing:0.275px;left:403.74px;width:300px;text-align:center;">$0</div>
<div style="position:absolute;top:626.8px;font-size:10px;line-height:11.500px;color:#111;white-space:nowrap;letter-spacing:0.275px;left:454.14px;width:300px;text-align:center;">$0</div>
<div style="position:absolute;top:627px;font-size:10.4px;line-height:11.960px;color:#111;white-space:nowrap;letter-spacing:-0.160px;font-weight:bold;-webkit-text-stroke:.06px;left:721.72px;width:300px;text-align:center;">$1,437.16</div>
<div style="position:absolute;left:18px;top:650px;width:885px;height:1px;background:#9c9c9c"></div>
</body></html>
